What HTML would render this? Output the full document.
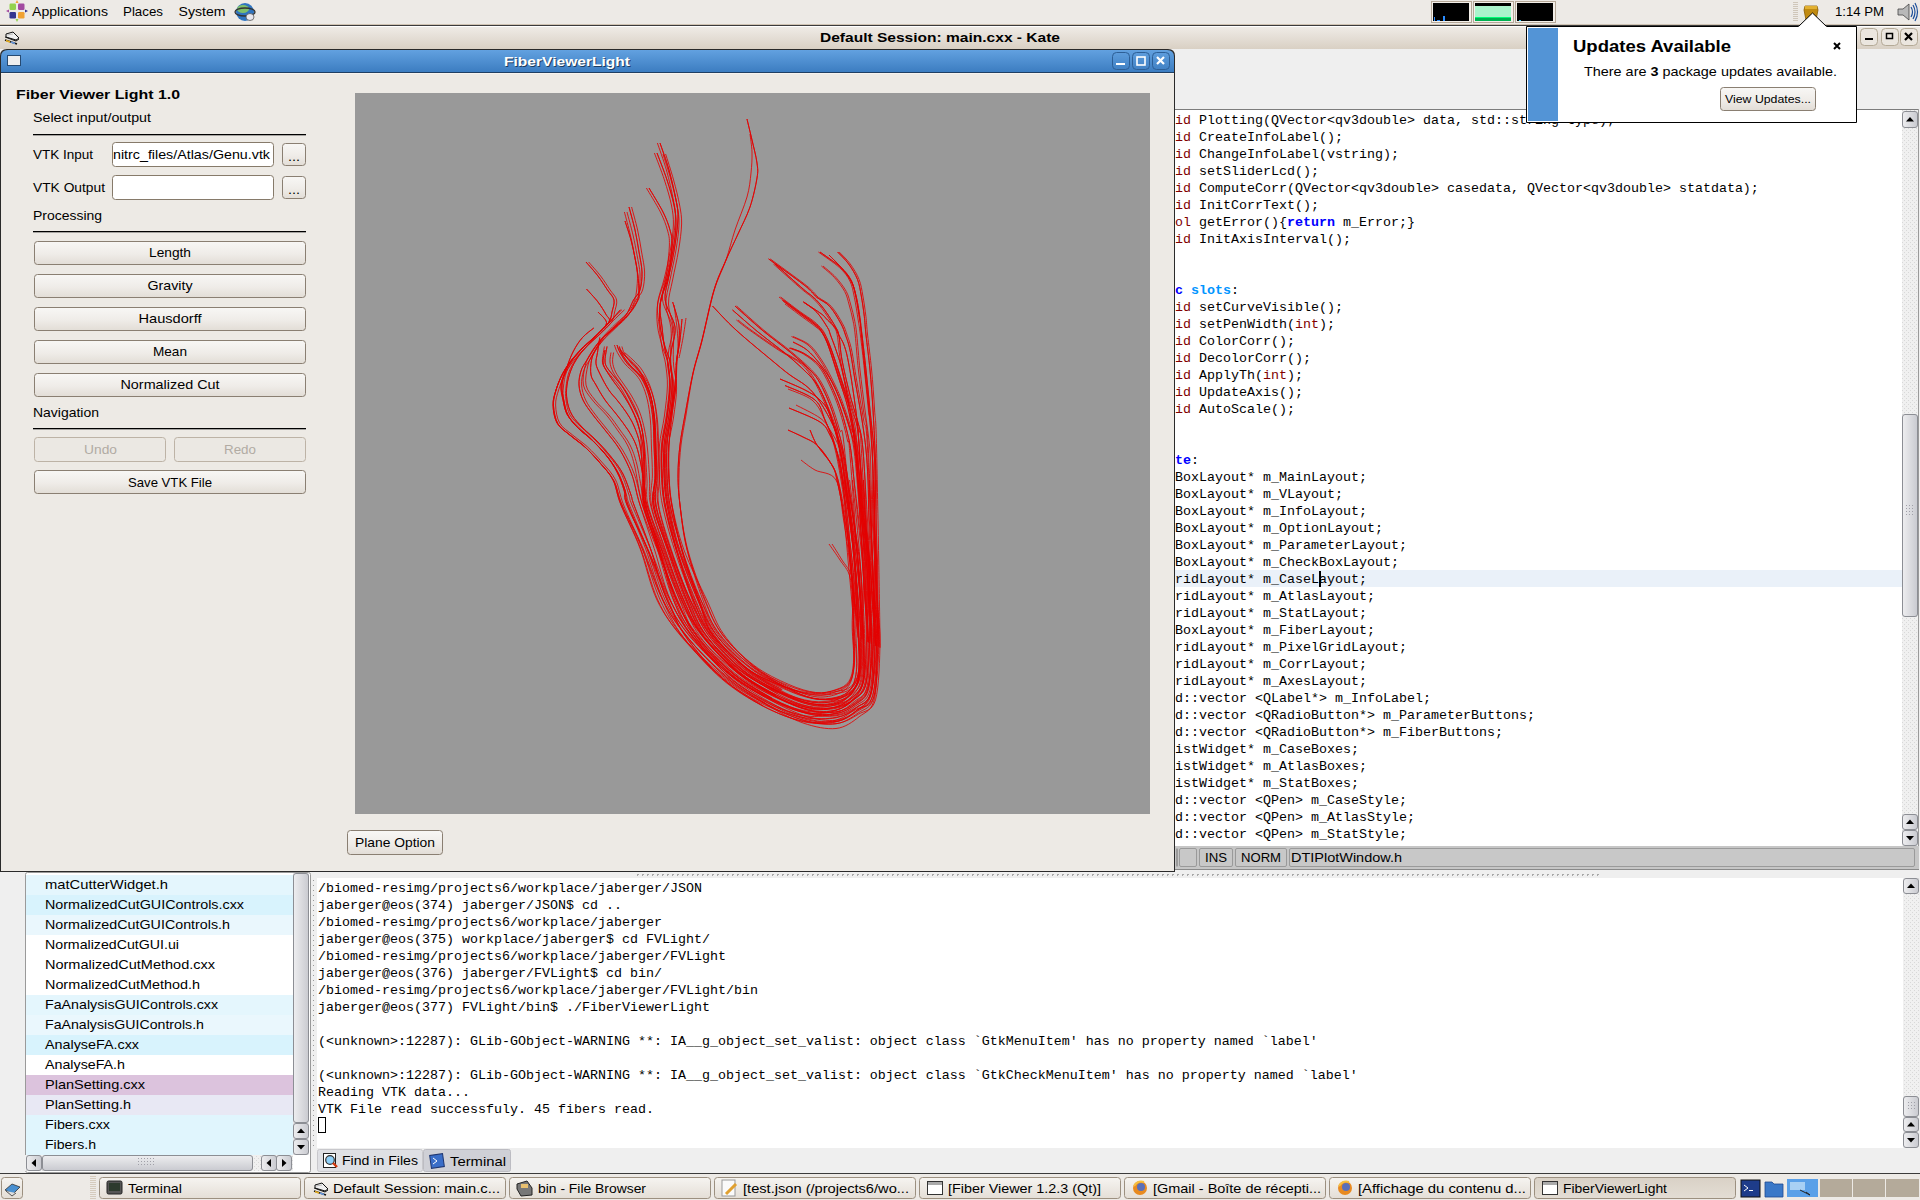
<!DOCTYPE html><html><head><meta charset="utf-8"><title>FiberViewerLight</title>
<style>html,body{margin:0;padding:0;width:1920px;height:1200px;overflow:hidden;background:#edeae5;}svg{display:block;font-family:"Liberation Sans",sans-serif;} text{white-space:pre;}</style></head><body>
<svg width="1920" height="1200" viewBox="0 0 1920 1200">
<defs>
<linearGradient id="btn" x1="0" y1="0" x2="0" y2="1"><stop offset="0" stop-color="#f8f7f5"/><stop offset="0.55" stop-color="#efece8"/><stop offset="1" stop-color="#e2ddd6"/></linearGradient>
<linearGradient id="blue" x1="0" y1="0" x2="0" y2="1"><stop offset="0" stop-color="#62a1e0"/><stop offset="1" stop-color="#3c7dc1"/></linearGradient>
<linearGradient id="katetitle" x1="0" y1="0" x2="0" y2="1"><stop offset="0" stop-color="#efebe6"/><stop offset="1" stop-color="#d9d0c4"/></linearGradient>
<linearGradient id="sb" x1="0" y1="0" x2="1" y2="0"><stop offset="0" stop-color="#eeeef0"/><stop offset="1" stop-color="#c9cad0"/></linearGradient>
<linearGradient id="sbh" x1="0" y1="0" x2="0" y2="1"><stop offset="0" stop-color="#eeeef0"/><stop offset="1" stop-color="#c9cad0"/></linearGradient>
<linearGradient id="task" x1="0" y1="0" x2="0" y2="1"><stop offset="0" stop-color="#f6f4f1"/><stop offset="1" stop-color="#e4ded6"/></linearGradient>
<linearGradient id="taskact" x1="0" y1="0" x2="0" y2="1"><stop offset="0" stop-color="#d9d1c6"/><stop offset="1" stop-color="#e3ddd4"/></linearGradient>
<pattern id="dots" width="4" height="4" patternUnits="userSpaceOnUse"><rect width="4" height="4" fill="#f0f0f0"/><rect x="0" y="0" width="1" height="1" fill="#d8d8d8"/><rect x="2" y="2" width="1" height="1" fill="#d8d8d8"/></pattern>
</defs>
<rect x="0" y="0" width="1920" height="1200" fill="#efefef"/>
<rect x="0" y="0" width="1920" height="24" fill="#edeae6"/>
<rect x="0" y="24" width="1920" height="1" fill="#cfc3b3"/>
<rect x="0" y="25" width="1920" height="1" fill="#3b3b3b"/>
<g transform="translate(17,11)"><rect x="-7.5" y="-7.5" width="6.5" height="6.5" rx="1.2" fill="#93d24e"/><rect x="1" y="-7.5" width="6.5" height="6.5" rx="1.2" fill="#a24aa0"/><rect x="-7.5" y="1" width="6.5" height="6.5" rx="1.2" fill="#33358f"/><rect x="1" y="1" width="6.5" height="6.5" rx="1.2" fill="#f0a232"/><path d="M-1.5 -8 L0 -11 L1.5 -8 Z" fill="#f0a232"/><path d="M8 -1.5 L11 0 L8 1.5 Z" fill="#33358f"/><path d="M-8 -1.5 L-11 0 L-8 1.5 Z" fill="#a24aa0"/><path d="M-1.5 8 L0 11 L1.5 8 Z" fill="#93d24e"/></g>
<text x="32" y="16" font-size="12.7" fill="#000" textLength="76" lengthAdjust="spacingAndGlyphs">Applications</text>
<text x="123" y="16" font-size="12.7" fill="#000" textLength="40" lengthAdjust="spacingAndGlyphs">Places</text>
<text x="178.5" y="16" font-size="12.7" fill="#000" textLength="47" lengthAdjust="spacingAndGlyphs">System</text>
<circle cx="245" cy="12" r="9" fill="#2f74c0"/><ellipse cx="243" cy="9" rx="6" ry="4" fill="#7fc06a"/><ellipse cx="245" cy="12" rx="10" ry="4" fill="none" stroke="#333" stroke-width="1.3"/><ellipse cx="250" cy="17" rx="4" ry="3.5" fill="#e8e8f0" stroke="#555" stroke-width="0.8"/>
<rect x="1431.5" y="1.5" width="40" height="21" fill="#f3efe9" stroke="#b5a898" stroke-width="1"/>
<rect x="1433" y="3" width="36" height="18" fill="#000"/>
<rect x="1434" y="17" width="1" height="4" fill="#2a8cff"/>
<rect x="1443" y="16" width="2" height="5" fill="#2a8cff"/>
<rect x="1437" y="20" width="3" height="1" fill="#2a8cff"/>
<rect x="1473.5" y="1.5" width="40" height="21" fill="#f3efe9" stroke="#b5a898" stroke-width="1"/>
<rect x="1475" y="3" width="36" height="18" fill="#000"/>
<rect x="1475" y="6" width="36" height="11" fill="#aaf4cc"/>
<rect x="1475" y="17" width="36" height="1" fill="#00ff77"/>
<rect x="1475" y="18" width="36" height="3" fill="#00b050"/>
<rect x="1515.5" y="1.5" width="40" height="21" fill="#f3efe9" stroke="#b5a898" stroke-width="1"/>
<rect x="1517" y="3" width="36" height="18" fill="#000"/>
<rect x="1519" y="20" width="2" height="1" fill="#2ad0ff"/>
<rect x="1793" y="2" width="5" height="1" fill="#cfc6b9"/>
<rect x="1793" y="4" width="5" height="1" fill="#cfc6b9"/>
<rect x="1793" y="6" width="5" height="1" fill="#cfc6b9"/>
<rect x="1793" y="8" width="5" height="1" fill="#cfc6b9"/>
<rect x="1793" y="10" width="5" height="1" fill="#cfc6b9"/>
<rect x="1793" y="12" width="5" height="1" fill="#cfc6b9"/>
<rect x="1793" y="14" width="5" height="1" fill="#cfc6b9"/>
<rect x="1793" y="16" width="5" height="1" fill="#cfc6b9"/>
<rect x="1793" y="18" width="5" height="1" fill="#cfc6b9"/>
<rect x="1793" y="20" width="5" height="1" fill="#cfc6b9"/>
<path d="M1805 6 L1817 6 L1818 10 L1816 20 L1806 20 L1804 10 Z" fill="#c08a10" stroke="#8a5e00" stroke-width="0.8"/><rect x="1805" y="6" width="12" height="3" fill="#e2b030"/>
<text x="1835" y="16" font-size="12.7" fill="#000" textLength="49" lengthAdjust="spacingAndGlyphs">1:14 PM</text>
<path d="M1898 9 L1903 9 L1909 4 L1909 20 L1903 15 L1898 15 Z" fill="#b8b8b8" stroke="#444" stroke-width="0.8"/><path d="M1911 7 Q1914 12 1911 17" fill="none" stroke="#1d4f9a" stroke-width="1.2"/><path d="M1913 5 Q1917 12 1913 19" fill="none" stroke="#1d4f9a" stroke-width="1.2"/><path d="M1915 3 Q1920 12 1915 21" fill="none" stroke="#1d4f9a" stroke-width="1.2"/>
<rect x="0" y="26" width="1920" height="1" fill="#ffffff"/>
<rect x="0" y="27" width="1920" height="22" fill="url(#katetitle)"/>
<g transform="translate(2,28)"><path d="M4 6 L11 4 L17 10 L14 12 L4 9 Z" fill="#f0f0f0" stroke="#111" stroke-width="1"/><path d="M3 9 L14 13 L17 11" fill="none" stroke="#111" stroke-width="1"/><path d="M3 12 L15 16" fill="none" stroke="#111" stroke-width="1.6"/><path d="M4 12.5 L8 14" stroke="#e8b020" stroke-width="1.6"/><path d="M9 14 L13 15.5" stroke="#6a9ae0" stroke-width="1.4"/><path d="M5 7 L11 6" stroke="#bbb" stroke-width="1"/></g>
<text x="820" y="42" font-size="12.7" fill="#000" font-weight="bold" textLength="240" lengthAdjust="spacingAndGlyphs">Default Session: main.cxx - Kate</text>
<rect x="1860.5" y="28.5" width="17" height="17" rx="4" fill="#ebe6df" stroke="#b3a996"/>
<rect x="1865" y="38" width="8" height="2" fill="#000"/>
<rect x="1881.5" y="28.5" width="17" height="17" rx="4" fill="#ebe6df" stroke="#b3a996"/>
<rect x="1886.5" y="33.5" width="6" height="5" fill="none" stroke="#000" stroke-width="1.5"/>
<rect x="1900.5" y="28.5" width="17" height="17" rx="4" fill="#ebe6df" stroke="#b3a996"/>
<path d="M1905 33 L1912 40 M1912 33 L1905 40" stroke="#000" stroke-width="2.2"/>
<rect x="1175" y="49" width="745" height="61" fill="#efefef"/>
<rect x="1175" y="109" width="744" height="1" fill="#7c7c7c"/>
<rect x="1175" y="110" width="728" height="736" fill="#ffffff"/>
<rect x="1918" y="109" width="1" height="761" fill="#9a9a9a"/>
<rect x="1175" y="570" width="728" height="17" fill="#eaf1f9"/>
<clipPath id="edclip"><rect x="1175" y="110" width="728" height="736"/></clipPath>
<g clip-path="url(#edclip)" font-family="'Liberation Mono', monospace" font-size="13.333">
<text x="1175" y="124"><tspan fill="#800000">id</tspan><tspan fill="#000"> Plotting(QVector&lt;qv3double&gt; data, std::string type);</tspan></text>
<text x="1175" y="141"><tspan fill="#800000">id</tspan><tspan fill="#000"> CreateInfoLabel();</tspan></text>
<text x="1175" y="158"><tspan fill="#800000">id</tspan><tspan fill="#000"> ChangeInfoLabel(vstring);</tspan></text>
<text x="1175" y="175"><tspan fill="#800000">id</tspan><tspan fill="#000"> setSliderLcd();</tspan></text>
<text x="1175" y="192"><tspan fill="#800000">id</tspan><tspan fill="#000"> ComputeCorr(QVector&lt;qv3double&gt; casedata, QVector&lt;qv3double&gt; statdata);</tspan></text>
<text x="1175" y="209"><tspan fill="#800000">id</tspan><tspan fill="#000"> InitCorrText();</tspan></text>
<text x="1175" y="226"><tspan fill="#800000">ol</tspan><tspan fill="#000"> getError(){</tspan><tspan fill="#0000ff" font-weight="bold">return</tspan><tspan fill="#000"> m_Error;}</tspan></text>
<text x="1175" y="243"><tspan fill="#800000">id</tspan><tspan fill="#000"> InitAxisInterval();</tspan></text>
<text x="1175" y="294"><tspan fill="#0000ff" font-weight="bold">c</tspan><tspan fill="#000"> </tspan><tspan fill="#0095ff" font-weight="bold">slots</tspan><tspan fill="#000">:</tspan></text>
<text x="1175" y="311"><tspan fill="#800000">id</tspan><tspan fill="#000"> setCurveVisible();</tspan></text>
<text x="1175" y="328"><tspan fill="#800000">id</tspan><tspan fill="#000"> setPenWidth(</tspan><tspan fill="#800000">int</tspan><tspan fill="#000">);</tspan></text>
<text x="1175" y="345"><tspan fill="#800000">id</tspan><tspan fill="#000"> ColorCorr();</tspan></text>
<text x="1175" y="362"><tspan fill="#800000">id</tspan><tspan fill="#000"> DecolorCorr();</tspan></text>
<text x="1175" y="379"><tspan fill="#800000">id</tspan><tspan fill="#000"> ApplyTh(</tspan><tspan fill="#800000">int</tspan><tspan fill="#000">);</tspan></text>
<text x="1175" y="396"><tspan fill="#800000">id</tspan><tspan fill="#000"> UpdateAxis();</tspan></text>
<text x="1175" y="413"><tspan fill="#800000">id</tspan><tspan fill="#000"> AutoScale();</tspan></text>
<text x="1175" y="464"><tspan fill="#0000ff" font-weight="bold">te</tspan><tspan fill="#000">:</tspan></text>
<text x="1175" y="481"><tspan fill="#000">BoxLayout* m_MainLayout;</tspan></text>
<text x="1175" y="498"><tspan fill="#000">BoxLayout* m_VLayout;</tspan></text>
<text x="1175" y="515"><tspan fill="#000">BoxLayout* m_InfoLayout;</tspan></text>
<text x="1175" y="532"><tspan fill="#000">BoxLayout* m_OptionLayout;</tspan></text>
<text x="1175" y="549"><tspan fill="#000">BoxLayout* m_ParameterLayout;</tspan></text>
<text x="1175" y="566"><tspan fill="#000">BoxLayout* m_CheckBoxLayout;</tspan></text>
<text x="1175" y="583"><tspan fill="#000">ridLayout* m_CaseLayout;</tspan></text>
<text x="1175" y="600"><tspan fill="#000">ridLayout* m_AtlasLayout;</tspan></text>
<text x="1175" y="617"><tspan fill="#000">ridLayout* m_StatLayout;</tspan></text>
<text x="1175" y="634"><tspan fill="#000">BoxLayout* m_FiberLayout;</tspan></text>
<text x="1175" y="651"><tspan fill="#000">ridLayout* m_PixelGridLayout;</tspan></text>
<text x="1175" y="668"><tspan fill="#000">ridLayout* m_CorrLayout;</tspan></text>
<text x="1175" y="685"><tspan fill="#000">ridLayout* m_AxesLayout;</tspan></text>
<text x="1175" y="702"><tspan fill="#000">d::vector &lt;QLabel*&gt; m_InfoLabel;</tspan></text>
<text x="1175" y="719"><tspan fill="#000">d::vector &lt;QRadioButton*&gt; m_ParameterButtons;</tspan></text>
<text x="1175" y="736"><tspan fill="#000">d::vector &lt;QRadioButton*&gt; m_FiberButtons;</tspan></text>
<text x="1175" y="753"><tspan fill="#000">istWidget* m_CaseBoxes;</tspan></text>
<text x="1175" y="770"><tspan fill="#000">istWidget* m_AtlasBoxes;</tspan></text>
<text x="1175" y="787"><tspan fill="#000">istWidget* m_StatBoxes;</tspan></text>
<text x="1175" y="804"><tspan fill="#000">d::vector &lt;QPen&gt; m_CaseStyle;</tspan></text>
<text x="1175" y="821"><tspan fill="#000">d::vector &lt;QPen&gt; m_AtlasStyle;</tspan></text>
<text x="1175" y="838"><tspan fill="#000">d::vector &lt;QPen&gt; m_StatStyle;</tspan></text>
<text x="1175" y="855"><tspan fill="#000">d::vector &lt;QPen&gt; m_FiberStyle;</tspan></text>
</g>
<rect x="1319" y="571" width="2" height="16" fill="#000"/>
<rect x="1902" y="110" width="16" height="736" fill="url(#dots)"/>
<rect x="1902.5" y="111.5" width="15" height="16" rx="2.5" fill="url(#sb)" stroke="#8c8e94"/>
<path d="M1906.0 121.5 L1914.0 121.5 L1910.0 117.0 Z" fill="#000"/>
<rect x="1902.5" y="414.5" width="15" height="202" rx="2.5" fill="url(#sb)" stroke="#8c8e94"/>
<rect x="1906" y="505" width="1" height="1" fill="#a0a0a8"/>
<rect x="1909" y="505" width="1" height="1" fill="#a0a0a8"/>
<rect x="1912" y="505" width="1" height="1" fill="#a0a0a8"/>
<rect x="1906" y="508" width="1" height="1" fill="#a0a0a8"/>
<rect x="1909" y="508" width="1" height="1" fill="#a0a0a8"/>
<rect x="1912" y="508" width="1" height="1" fill="#a0a0a8"/>
<rect x="1906" y="511" width="1" height="1" fill="#a0a0a8"/>
<rect x="1909" y="511" width="1" height="1" fill="#a0a0a8"/>
<rect x="1912" y="511" width="1" height="1" fill="#a0a0a8"/>
<rect x="1906" y="514" width="1" height="1" fill="#a0a0a8"/>
<rect x="1909" y="514" width="1" height="1" fill="#a0a0a8"/>
<rect x="1912" y="514" width="1" height="1" fill="#a0a0a8"/>
<rect x="1902.5" y="814.5" width="15" height="15" rx="2.5" fill="url(#sb)" stroke="#8c8e94"/>
<path d="M1906.0 824.0 L1914.0 824.0 L1910.0 819.5 Z" fill="#000"/>
<rect x="1902.5" y="830.5" width="15" height="15" rx="2.5" fill="url(#sb)" stroke="#8c8e94"/>
<path d="M1906.0 836.0 L1914.0 836.0 L1910.0 840.5 Z" fill="#000"/>
<rect x="1175" y="846" width="744" height="24" fill="#c6c6c6"/>
<rect x="1175" y="869" width="744" height="1" fill="#8a8a8a"/>
<rect x="1176.5" y="848.5" width="1" height="18" rx="1.5" fill="#c8c8c8" stroke="#9a9a9a"/>
<rect x="1179.5" y="848.5" width="17" height="18" rx="1.5" fill="#c8c8c8" stroke="#9a9a9a"/>
<rect x="1199.5" y="848.5" width="33" height="18" rx="1.5" fill="#c8c8c8" stroke="#9a9a9a"/>
<text x="1205" y="862" font-size="12.7" fill="#000" textLength="22" lengthAdjust="spacingAndGlyphs">INS</text>
<rect x="1235.5" y="848.5" width="51" height="18" rx="1.5" fill="#c8c8c8" stroke="#9a9a9a"/>
<text x="1241" y="862" font-size="12.7" fill="#000" textLength="40" lengthAdjust="spacingAndGlyphs">NORM</text>
<rect x="1289.5" y="848.5" width="625" height="18" rx="1.5" fill="#c8c8c8" stroke="#9a9a9a"/>
<text x="1291" y="862" font-size="12.7" fill="#000" textLength="111" lengthAdjust="spacingAndGlyphs">DTIPlotWindow.h</text>
<rect x="317" y="870" width="1603" height="8" fill="#efefef"/>
<rect x="637" y="874" width="2" height="1" fill="#a8a8a8"/>
<rect x="637" y="875" width="1" height="1" fill="#a8a8a8"/>
<rect x="642" y="874" width="2" height="1" fill="#a8a8a8"/>
<rect x="642" y="875" width="1" height="1" fill="#a8a8a8"/>
<rect x="647" y="874" width="2" height="1" fill="#a8a8a8"/>
<rect x="647" y="875" width="1" height="1" fill="#a8a8a8"/>
<rect x="652" y="874" width="2" height="1" fill="#a8a8a8"/>
<rect x="652" y="875" width="1" height="1" fill="#a8a8a8"/>
<rect x="657" y="874" width="2" height="1" fill="#a8a8a8"/>
<rect x="657" y="875" width="1" height="1" fill="#a8a8a8"/>
<rect x="662" y="874" width="2" height="1" fill="#a8a8a8"/>
<rect x="662" y="875" width="1" height="1" fill="#a8a8a8"/>
<rect x="667" y="874" width="2" height="1" fill="#a8a8a8"/>
<rect x="667" y="875" width="1" height="1" fill="#a8a8a8"/>
<rect x="672" y="874" width="2" height="1" fill="#a8a8a8"/>
<rect x="672" y="875" width="1" height="1" fill="#a8a8a8"/>
<rect x="677" y="874" width="2" height="1" fill="#a8a8a8"/>
<rect x="677" y="875" width="1" height="1" fill="#a8a8a8"/>
<rect x="682" y="874" width="2" height="1" fill="#a8a8a8"/>
<rect x="682" y="875" width="1" height="1" fill="#a8a8a8"/>
<rect x="687" y="874" width="2" height="1" fill="#a8a8a8"/>
<rect x="687" y="875" width="1" height="1" fill="#a8a8a8"/>
<rect x="692" y="874" width="2" height="1" fill="#a8a8a8"/>
<rect x="692" y="875" width="1" height="1" fill="#a8a8a8"/>
<rect x="697" y="874" width="2" height="1" fill="#a8a8a8"/>
<rect x="697" y="875" width="1" height="1" fill="#a8a8a8"/>
<rect x="702" y="874" width="2" height="1" fill="#a8a8a8"/>
<rect x="702" y="875" width="1" height="1" fill="#a8a8a8"/>
<rect x="707" y="874" width="2" height="1" fill="#a8a8a8"/>
<rect x="707" y="875" width="1" height="1" fill="#a8a8a8"/>
<rect x="712" y="874" width="2" height="1" fill="#a8a8a8"/>
<rect x="712" y="875" width="1" height="1" fill="#a8a8a8"/>
<rect x="717" y="874" width="2" height="1" fill="#a8a8a8"/>
<rect x="717" y="875" width="1" height="1" fill="#a8a8a8"/>
<rect x="722" y="874" width="2" height="1" fill="#a8a8a8"/>
<rect x="722" y="875" width="1" height="1" fill="#a8a8a8"/>
<rect x="727" y="874" width="2" height="1" fill="#a8a8a8"/>
<rect x="727" y="875" width="1" height="1" fill="#a8a8a8"/>
<rect x="732" y="874" width="2" height="1" fill="#a8a8a8"/>
<rect x="732" y="875" width="1" height="1" fill="#a8a8a8"/>
<rect x="737" y="874" width="2" height="1" fill="#a8a8a8"/>
<rect x="737" y="875" width="1" height="1" fill="#a8a8a8"/>
<rect x="742" y="874" width="2" height="1" fill="#a8a8a8"/>
<rect x="742" y="875" width="1" height="1" fill="#a8a8a8"/>
<rect x="747" y="874" width="2" height="1" fill="#a8a8a8"/>
<rect x="747" y="875" width="1" height="1" fill="#a8a8a8"/>
<rect x="752" y="874" width="2" height="1" fill="#a8a8a8"/>
<rect x="752" y="875" width="1" height="1" fill="#a8a8a8"/>
<rect x="757" y="874" width="2" height="1" fill="#a8a8a8"/>
<rect x="757" y="875" width="1" height="1" fill="#a8a8a8"/>
<rect x="762" y="874" width="2" height="1" fill="#a8a8a8"/>
<rect x="762" y="875" width="1" height="1" fill="#a8a8a8"/>
<rect x="767" y="874" width="2" height="1" fill="#a8a8a8"/>
<rect x="767" y="875" width="1" height="1" fill="#a8a8a8"/>
<rect x="772" y="874" width="2" height="1" fill="#a8a8a8"/>
<rect x="772" y="875" width="1" height="1" fill="#a8a8a8"/>
<rect x="777" y="874" width="2" height="1" fill="#a8a8a8"/>
<rect x="777" y="875" width="1" height="1" fill="#a8a8a8"/>
<rect x="782" y="874" width="2" height="1" fill="#a8a8a8"/>
<rect x="782" y="875" width="1" height="1" fill="#a8a8a8"/>
<rect x="787" y="874" width="2" height="1" fill="#a8a8a8"/>
<rect x="787" y="875" width="1" height="1" fill="#a8a8a8"/>
<rect x="792" y="874" width="2" height="1" fill="#a8a8a8"/>
<rect x="792" y="875" width="1" height="1" fill="#a8a8a8"/>
<rect x="797" y="874" width="2" height="1" fill="#a8a8a8"/>
<rect x="797" y="875" width="1" height="1" fill="#a8a8a8"/>
<rect x="802" y="874" width="2" height="1" fill="#a8a8a8"/>
<rect x="802" y="875" width="1" height="1" fill="#a8a8a8"/>
<rect x="807" y="874" width="2" height="1" fill="#a8a8a8"/>
<rect x="807" y="875" width="1" height="1" fill="#a8a8a8"/>
<rect x="812" y="874" width="2" height="1" fill="#a8a8a8"/>
<rect x="812" y="875" width="1" height="1" fill="#a8a8a8"/>
<rect x="817" y="874" width="2" height="1" fill="#a8a8a8"/>
<rect x="817" y="875" width="1" height="1" fill="#a8a8a8"/>
<rect x="822" y="874" width="2" height="1" fill="#a8a8a8"/>
<rect x="822" y="875" width="1" height="1" fill="#a8a8a8"/>
<rect x="827" y="874" width="2" height="1" fill="#a8a8a8"/>
<rect x="827" y="875" width="1" height="1" fill="#a8a8a8"/>
<rect x="832" y="874" width="2" height="1" fill="#a8a8a8"/>
<rect x="832" y="875" width="1" height="1" fill="#a8a8a8"/>
<rect x="837" y="874" width="2" height="1" fill="#a8a8a8"/>
<rect x="837" y="875" width="1" height="1" fill="#a8a8a8"/>
<rect x="842" y="874" width="2" height="1" fill="#a8a8a8"/>
<rect x="842" y="875" width="1" height="1" fill="#a8a8a8"/>
<rect x="847" y="874" width="2" height="1" fill="#a8a8a8"/>
<rect x="847" y="875" width="1" height="1" fill="#a8a8a8"/>
<rect x="852" y="874" width="2" height="1" fill="#a8a8a8"/>
<rect x="852" y="875" width="1" height="1" fill="#a8a8a8"/>
<rect x="857" y="874" width="2" height="1" fill="#a8a8a8"/>
<rect x="857" y="875" width="1" height="1" fill="#a8a8a8"/>
<rect x="862" y="874" width="2" height="1" fill="#a8a8a8"/>
<rect x="862" y="875" width="1" height="1" fill="#a8a8a8"/>
<rect x="867" y="874" width="2" height="1" fill="#a8a8a8"/>
<rect x="867" y="875" width="1" height="1" fill="#a8a8a8"/>
<rect x="872" y="874" width="2" height="1" fill="#a8a8a8"/>
<rect x="872" y="875" width="1" height="1" fill="#a8a8a8"/>
<rect x="877" y="874" width="2" height="1" fill="#a8a8a8"/>
<rect x="877" y="875" width="1" height="1" fill="#a8a8a8"/>
<rect x="882" y="874" width="2" height="1" fill="#a8a8a8"/>
<rect x="882" y="875" width="1" height="1" fill="#a8a8a8"/>
<rect x="887" y="874" width="2" height="1" fill="#a8a8a8"/>
<rect x="887" y="875" width="1" height="1" fill="#a8a8a8"/>
<rect x="892" y="874" width="2" height="1" fill="#a8a8a8"/>
<rect x="892" y="875" width="1" height="1" fill="#a8a8a8"/>
<rect x="897" y="874" width="2" height="1" fill="#a8a8a8"/>
<rect x="897" y="875" width="1" height="1" fill="#a8a8a8"/>
<rect x="902" y="874" width="2" height="1" fill="#a8a8a8"/>
<rect x="902" y="875" width="1" height="1" fill="#a8a8a8"/>
<rect x="907" y="874" width="2" height="1" fill="#a8a8a8"/>
<rect x="907" y="875" width="1" height="1" fill="#a8a8a8"/>
<rect x="912" y="874" width="2" height="1" fill="#a8a8a8"/>
<rect x="912" y="875" width="1" height="1" fill="#a8a8a8"/>
<rect x="917" y="874" width="2" height="1" fill="#a8a8a8"/>
<rect x="917" y="875" width="1" height="1" fill="#a8a8a8"/>
<rect x="922" y="874" width="2" height="1" fill="#a8a8a8"/>
<rect x="922" y="875" width="1" height="1" fill="#a8a8a8"/>
<rect x="927" y="874" width="2" height="1" fill="#a8a8a8"/>
<rect x="927" y="875" width="1" height="1" fill="#a8a8a8"/>
<rect x="932" y="874" width="2" height="1" fill="#a8a8a8"/>
<rect x="932" y="875" width="1" height="1" fill="#a8a8a8"/>
<rect x="937" y="874" width="2" height="1" fill="#a8a8a8"/>
<rect x="937" y="875" width="1" height="1" fill="#a8a8a8"/>
<rect x="942" y="874" width="2" height="1" fill="#a8a8a8"/>
<rect x="942" y="875" width="1" height="1" fill="#a8a8a8"/>
<rect x="947" y="874" width="2" height="1" fill="#a8a8a8"/>
<rect x="947" y="875" width="1" height="1" fill="#a8a8a8"/>
<rect x="952" y="874" width="2" height="1" fill="#a8a8a8"/>
<rect x="952" y="875" width="1" height="1" fill="#a8a8a8"/>
<rect x="957" y="874" width="2" height="1" fill="#a8a8a8"/>
<rect x="957" y="875" width="1" height="1" fill="#a8a8a8"/>
<rect x="962" y="874" width="2" height="1" fill="#a8a8a8"/>
<rect x="962" y="875" width="1" height="1" fill="#a8a8a8"/>
<rect x="967" y="874" width="2" height="1" fill="#a8a8a8"/>
<rect x="967" y="875" width="1" height="1" fill="#a8a8a8"/>
<rect x="972" y="874" width="2" height="1" fill="#a8a8a8"/>
<rect x="972" y="875" width="1" height="1" fill="#a8a8a8"/>
<rect x="977" y="874" width="2" height="1" fill="#a8a8a8"/>
<rect x="977" y="875" width="1" height="1" fill="#a8a8a8"/>
<rect x="982" y="874" width="2" height="1" fill="#a8a8a8"/>
<rect x="982" y="875" width="1" height="1" fill="#a8a8a8"/>
<rect x="987" y="874" width="2" height="1" fill="#a8a8a8"/>
<rect x="987" y="875" width="1" height="1" fill="#a8a8a8"/>
<rect x="992" y="874" width="2" height="1" fill="#a8a8a8"/>
<rect x="992" y="875" width="1" height="1" fill="#a8a8a8"/>
<rect x="997" y="874" width="2" height="1" fill="#a8a8a8"/>
<rect x="997" y="875" width="1" height="1" fill="#a8a8a8"/>
<rect x="1002" y="874" width="2" height="1" fill="#a8a8a8"/>
<rect x="1002" y="875" width="1" height="1" fill="#a8a8a8"/>
<rect x="1007" y="874" width="2" height="1" fill="#a8a8a8"/>
<rect x="1007" y="875" width="1" height="1" fill="#a8a8a8"/>
<rect x="1012" y="874" width="2" height="1" fill="#a8a8a8"/>
<rect x="1012" y="875" width="1" height="1" fill="#a8a8a8"/>
<rect x="1017" y="874" width="2" height="1" fill="#a8a8a8"/>
<rect x="1017" y="875" width="1" height="1" fill="#a8a8a8"/>
<rect x="1022" y="874" width="2" height="1" fill="#a8a8a8"/>
<rect x="1022" y="875" width="1" height="1" fill="#a8a8a8"/>
<rect x="1027" y="874" width="2" height="1" fill="#a8a8a8"/>
<rect x="1027" y="875" width="1" height="1" fill="#a8a8a8"/>
<rect x="1032" y="874" width="2" height="1" fill="#a8a8a8"/>
<rect x="1032" y="875" width="1" height="1" fill="#a8a8a8"/>
<rect x="1037" y="874" width="2" height="1" fill="#a8a8a8"/>
<rect x="1037" y="875" width="1" height="1" fill="#a8a8a8"/>
<rect x="1042" y="874" width="2" height="1" fill="#a8a8a8"/>
<rect x="1042" y="875" width="1" height="1" fill="#a8a8a8"/>
<rect x="1047" y="874" width="2" height="1" fill="#a8a8a8"/>
<rect x="1047" y="875" width="1" height="1" fill="#a8a8a8"/>
<rect x="1052" y="874" width="2" height="1" fill="#a8a8a8"/>
<rect x="1052" y="875" width="1" height="1" fill="#a8a8a8"/>
<rect x="1057" y="874" width="2" height="1" fill="#a8a8a8"/>
<rect x="1057" y="875" width="1" height="1" fill="#a8a8a8"/>
<rect x="1062" y="874" width="2" height="1" fill="#a8a8a8"/>
<rect x="1062" y="875" width="1" height="1" fill="#a8a8a8"/>
<rect x="1067" y="874" width="2" height="1" fill="#a8a8a8"/>
<rect x="1067" y="875" width="1" height="1" fill="#a8a8a8"/>
<rect x="1072" y="874" width="2" height="1" fill="#a8a8a8"/>
<rect x="1072" y="875" width="1" height="1" fill="#a8a8a8"/>
<rect x="1077" y="874" width="2" height="1" fill="#a8a8a8"/>
<rect x="1077" y="875" width="1" height="1" fill="#a8a8a8"/>
<rect x="1082" y="874" width="2" height="1" fill="#a8a8a8"/>
<rect x="1082" y="875" width="1" height="1" fill="#a8a8a8"/>
<rect x="1087" y="874" width="2" height="1" fill="#a8a8a8"/>
<rect x="1087" y="875" width="1" height="1" fill="#a8a8a8"/>
<rect x="1092" y="874" width="2" height="1" fill="#a8a8a8"/>
<rect x="1092" y="875" width="1" height="1" fill="#a8a8a8"/>
<rect x="1097" y="874" width="2" height="1" fill="#a8a8a8"/>
<rect x="1097" y="875" width="1" height="1" fill="#a8a8a8"/>
<rect x="1102" y="874" width="2" height="1" fill="#a8a8a8"/>
<rect x="1102" y="875" width="1" height="1" fill="#a8a8a8"/>
<rect x="1107" y="874" width="2" height="1" fill="#a8a8a8"/>
<rect x="1107" y="875" width="1" height="1" fill="#a8a8a8"/>
<rect x="1112" y="874" width="2" height="1" fill="#a8a8a8"/>
<rect x="1112" y="875" width="1" height="1" fill="#a8a8a8"/>
<rect x="1117" y="874" width="2" height="1" fill="#a8a8a8"/>
<rect x="1117" y="875" width="1" height="1" fill="#a8a8a8"/>
<rect x="1122" y="874" width="2" height="1" fill="#a8a8a8"/>
<rect x="1122" y="875" width="1" height="1" fill="#a8a8a8"/>
<rect x="1127" y="874" width="2" height="1" fill="#a8a8a8"/>
<rect x="1127" y="875" width="1" height="1" fill="#a8a8a8"/>
<rect x="1132" y="874" width="2" height="1" fill="#a8a8a8"/>
<rect x="1132" y="875" width="1" height="1" fill="#a8a8a8"/>
<rect x="1137" y="874" width="2" height="1" fill="#a8a8a8"/>
<rect x="1137" y="875" width="1" height="1" fill="#a8a8a8"/>
<rect x="1142" y="874" width="2" height="1" fill="#a8a8a8"/>
<rect x="1142" y="875" width="1" height="1" fill="#a8a8a8"/>
<rect x="1147" y="874" width="2" height="1" fill="#a8a8a8"/>
<rect x="1147" y="875" width="1" height="1" fill="#a8a8a8"/>
<rect x="1152" y="874" width="2" height="1" fill="#a8a8a8"/>
<rect x="1152" y="875" width="1" height="1" fill="#a8a8a8"/>
<rect x="1157" y="874" width="2" height="1" fill="#a8a8a8"/>
<rect x="1157" y="875" width="1" height="1" fill="#a8a8a8"/>
<rect x="1162" y="874" width="2" height="1" fill="#a8a8a8"/>
<rect x="1162" y="875" width="1" height="1" fill="#a8a8a8"/>
<rect x="1167" y="874" width="2" height="1" fill="#a8a8a8"/>
<rect x="1167" y="875" width="1" height="1" fill="#a8a8a8"/>
<rect x="1172" y="874" width="2" height="1" fill="#a8a8a8"/>
<rect x="1172" y="875" width="1" height="1" fill="#a8a8a8"/>
<rect x="1177" y="874" width="2" height="1" fill="#a8a8a8"/>
<rect x="1177" y="875" width="1" height="1" fill="#a8a8a8"/>
<rect x="1182" y="874" width="2" height="1" fill="#a8a8a8"/>
<rect x="1182" y="875" width="1" height="1" fill="#a8a8a8"/>
<rect x="1187" y="874" width="2" height="1" fill="#a8a8a8"/>
<rect x="1187" y="875" width="1" height="1" fill="#a8a8a8"/>
<rect x="1192" y="874" width="2" height="1" fill="#a8a8a8"/>
<rect x="1192" y="875" width="1" height="1" fill="#a8a8a8"/>
<rect x="1197" y="874" width="2" height="1" fill="#a8a8a8"/>
<rect x="1197" y="875" width="1" height="1" fill="#a8a8a8"/>
<rect x="1202" y="874" width="2" height="1" fill="#a8a8a8"/>
<rect x="1202" y="875" width="1" height="1" fill="#a8a8a8"/>
<rect x="1207" y="874" width="2" height="1" fill="#a8a8a8"/>
<rect x="1207" y="875" width="1" height="1" fill="#a8a8a8"/>
<rect x="1212" y="874" width="2" height="1" fill="#a8a8a8"/>
<rect x="1212" y="875" width="1" height="1" fill="#a8a8a8"/>
<rect x="1217" y="874" width="2" height="1" fill="#a8a8a8"/>
<rect x="1217" y="875" width="1" height="1" fill="#a8a8a8"/>
<rect x="1222" y="874" width="2" height="1" fill="#a8a8a8"/>
<rect x="1222" y="875" width="1" height="1" fill="#a8a8a8"/>
<rect x="1227" y="874" width="2" height="1" fill="#a8a8a8"/>
<rect x="1227" y="875" width="1" height="1" fill="#a8a8a8"/>
<rect x="1232" y="874" width="2" height="1" fill="#a8a8a8"/>
<rect x="1232" y="875" width="1" height="1" fill="#a8a8a8"/>
<rect x="1237" y="874" width="2" height="1" fill="#a8a8a8"/>
<rect x="1237" y="875" width="1" height="1" fill="#a8a8a8"/>
<rect x="1242" y="874" width="2" height="1" fill="#a8a8a8"/>
<rect x="1242" y="875" width="1" height="1" fill="#a8a8a8"/>
<rect x="1247" y="874" width="2" height="1" fill="#a8a8a8"/>
<rect x="1247" y="875" width="1" height="1" fill="#a8a8a8"/>
<rect x="1252" y="874" width="2" height="1" fill="#a8a8a8"/>
<rect x="1252" y="875" width="1" height="1" fill="#a8a8a8"/>
<rect x="1257" y="874" width="2" height="1" fill="#a8a8a8"/>
<rect x="1257" y="875" width="1" height="1" fill="#a8a8a8"/>
<rect x="1262" y="874" width="2" height="1" fill="#a8a8a8"/>
<rect x="1262" y="875" width="1" height="1" fill="#a8a8a8"/>
<rect x="1267" y="874" width="2" height="1" fill="#a8a8a8"/>
<rect x="1267" y="875" width="1" height="1" fill="#a8a8a8"/>
<rect x="1272" y="874" width="2" height="1" fill="#a8a8a8"/>
<rect x="1272" y="875" width="1" height="1" fill="#a8a8a8"/>
<rect x="1277" y="874" width="2" height="1" fill="#a8a8a8"/>
<rect x="1277" y="875" width="1" height="1" fill="#a8a8a8"/>
<rect x="1282" y="874" width="2" height="1" fill="#a8a8a8"/>
<rect x="1282" y="875" width="1" height="1" fill="#a8a8a8"/>
<rect x="1287" y="874" width="2" height="1" fill="#a8a8a8"/>
<rect x="1287" y="875" width="1" height="1" fill="#a8a8a8"/>
<rect x="1292" y="874" width="2" height="1" fill="#a8a8a8"/>
<rect x="1292" y="875" width="1" height="1" fill="#a8a8a8"/>
<rect x="1297" y="874" width="2" height="1" fill="#a8a8a8"/>
<rect x="1297" y="875" width="1" height="1" fill="#a8a8a8"/>
<rect x="1302" y="874" width="2" height="1" fill="#a8a8a8"/>
<rect x="1302" y="875" width="1" height="1" fill="#a8a8a8"/>
<rect x="1307" y="874" width="2" height="1" fill="#a8a8a8"/>
<rect x="1307" y="875" width="1" height="1" fill="#a8a8a8"/>
<rect x="1312" y="874" width="2" height="1" fill="#a8a8a8"/>
<rect x="1312" y="875" width="1" height="1" fill="#a8a8a8"/>
<rect x="1317" y="874" width="2" height="1" fill="#a8a8a8"/>
<rect x="1317" y="875" width="1" height="1" fill="#a8a8a8"/>
<rect x="1322" y="874" width="2" height="1" fill="#a8a8a8"/>
<rect x="1322" y="875" width="1" height="1" fill="#a8a8a8"/>
<rect x="1327" y="874" width="2" height="1" fill="#a8a8a8"/>
<rect x="1327" y="875" width="1" height="1" fill="#a8a8a8"/>
<rect x="1332" y="874" width="2" height="1" fill="#a8a8a8"/>
<rect x="1332" y="875" width="1" height="1" fill="#a8a8a8"/>
<rect x="1337" y="874" width="2" height="1" fill="#a8a8a8"/>
<rect x="1337" y="875" width="1" height="1" fill="#a8a8a8"/>
<rect x="1342" y="874" width="2" height="1" fill="#a8a8a8"/>
<rect x="1342" y="875" width="1" height="1" fill="#a8a8a8"/>
<rect x="1347" y="874" width="2" height="1" fill="#a8a8a8"/>
<rect x="1347" y="875" width="1" height="1" fill="#a8a8a8"/>
<rect x="1352" y="874" width="2" height="1" fill="#a8a8a8"/>
<rect x="1352" y="875" width="1" height="1" fill="#a8a8a8"/>
<rect x="1357" y="874" width="2" height="1" fill="#a8a8a8"/>
<rect x="1357" y="875" width="1" height="1" fill="#a8a8a8"/>
<rect x="1362" y="874" width="2" height="1" fill="#a8a8a8"/>
<rect x="1362" y="875" width="1" height="1" fill="#a8a8a8"/>
<rect x="1367" y="874" width="2" height="1" fill="#a8a8a8"/>
<rect x="1367" y="875" width="1" height="1" fill="#a8a8a8"/>
<rect x="1372" y="874" width="2" height="1" fill="#a8a8a8"/>
<rect x="1372" y="875" width="1" height="1" fill="#a8a8a8"/>
<rect x="1377" y="874" width="2" height="1" fill="#a8a8a8"/>
<rect x="1377" y="875" width="1" height="1" fill="#a8a8a8"/>
<rect x="1382" y="874" width="2" height="1" fill="#a8a8a8"/>
<rect x="1382" y="875" width="1" height="1" fill="#a8a8a8"/>
<rect x="1387" y="874" width="2" height="1" fill="#a8a8a8"/>
<rect x="1387" y="875" width="1" height="1" fill="#a8a8a8"/>
<rect x="1392" y="874" width="2" height="1" fill="#a8a8a8"/>
<rect x="1392" y="875" width="1" height="1" fill="#a8a8a8"/>
<rect x="1397" y="874" width="2" height="1" fill="#a8a8a8"/>
<rect x="1397" y="875" width="1" height="1" fill="#a8a8a8"/>
<rect x="1402" y="874" width="2" height="1" fill="#a8a8a8"/>
<rect x="1402" y="875" width="1" height="1" fill="#a8a8a8"/>
<rect x="1407" y="874" width="2" height="1" fill="#a8a8a8"/>
<rect x="1407" y="875" width="1" height="1" fill="#a8a8a8"/>
<rect x="1412" y="874" width="2" height="1" fill="#a8a8a8"/>
<rect x="1412" y="875" width="1" height="1" fill="#a8a8a8"/>
<rect x="1417" y="874" width="2" height="1" fill="#a8a8a8"/>
<rect x="1417" y="875" width="1" height="1" fill="#a8a8a8"/>
<rect x="1422" y="874" width="2" height="1" fill="#a8a8a8"/>
<rect x="1422" y="875" width="1" height="1" fill="#a8a8a8"/>
<rect x="1427" y="874" width="2" height="1" fill="#a8a8a8"/>
<rect x="1427" y="875" width="1" height="1" fill="#a8a8a8"/>
<rect x="1432" y="874" width="2" height="1" fill="#a8a8a8"/>
<rect x="1432" y="875" width="1" height="1" fill="#a8a8a8"/>
<rect x="1437" y="874" width="2" height="1" fill="#a8a8a8"/>
<rect x="1437" y="875" width="1" height="1" fill="#a8a8a8"/>
<rect x="1442" y="874" width="2" height="1" fill="#a8a8a8"/>
<rect x="1442" y="875" width="1" height="1" fill="#a8a8a8"/>
<rect x="1447" y="874" width="2" height="1" fill="#a8a8a8"/>
<rect x="1447" y="875" width="1" height="1" fill="#a8a8a8"/>
<rect x="1452" y="874" width="2" height="1" fill="#a8a8a8"/>
<rect x="1452" y="875" width="1" height="1" fill="#a8a8a8"/>
<rect x="1457" y="874" width="2" height="1" fill="#a8a8a8"/>
<rect x="1457" y="875" width="1" height="1" fill="#a8a8a8"/>
<rect x="1462" y="874" width="2" height="1" fill="#a8a8a8"/>
<rect x="1462" y="875" width="1" height="1" fill="#a8a8a8"/>
<rect x="1467" y="874" width="2" height="1" fill="#a8a8a8"/>
<rect x="1467" y="875" width="1" height="1" fill="#a8a8a8"/>
<rect x="1472" y="874" width="2" height="1" fill="#a8a8a8"/>
<rect x="1472" y="875" width="1" height="1" fill="#a8a8a8"/>
<rect x="1477" y="874" width="2" height="1" fill="#a8a8a8"/>
<rect x="1477" y="875" width="1" height="1" fill="#a8a8a8"/>
<rect x="1482" y="874" width="2" height="1" fill="#a8a8a8"/>
<rect x="1482" y="875" width="1" height="1" fill="#a8a8a8"/>
<rect x="1487" y="874" width="2" height="1" fill="#a8a8a8"/>
<rect x="1487" y="875" width="1" height="1" fill="#a8a8a8"/>
<rect x="1492" y="874" width="2" height="1" fill="#a8a8a8"/>
<rect x="1492" y="875" width="1" height="1" fill="#a8a8a8"/>
<rect x="1497" y="874" width="2" height="1" fill="#a8a8a8"/>
<rect x="1497" y="875" width="1" height="1" fill="#a8a8a8"/>
<rect x="1502" y="874" width="2" height="1" fill="#a8a8a8"/>
<rect x="1502" y="875" width="1" height="1" fill="#a8a8a8"/>
<rect x="1507" y="874" width="2" height="1" fill="#a8a8a8"/>
<rect x="1507" y="875" width="1" height="1" fill="#a8a8a8"/>
<rect x="1512" y="874" width="2" height="1" fill="#a8a8a8"/>
<rect x="1512" y="875" width="1" height="1" fill="#a8a8a8"/>
<rect x="1517" y="874" width="2" height="1" fill="#a8a8a8"/>
<rect x="1517" y="875" width="1" height="1" fill="#a8a8a8"/>
<rect x="1522" y="874" width="2" height="1" fill="#a8a8a8"/>
<rect x="1522" y="875" width="1" height="1" fill="#a8a8a8"/>
<rect x="1527" y="874" width="2" height="1" fill="#a8a8a8"/>
<rect x="1527" y="875" width="1" height="1" fill="#a8a8a8"/>
<rect x="1532" y="874" width="2" height="1" fill="#a8a8a8"/>
<rect x="1532" y="875" width="1" height="1" fill="#a8a8a8"/>
<rect x="1537" y="874" width="2" height="1" fill="#a8a8a8"/>
<rect x="1537" y="875" width="1" height="1" fill="#a8a8a8"/>
<rect x="1542" y="874" width="2" height="1" fill="#a8a8a8"/>
<rect x="1542" y="875" width="1" height="1" fill="#a8a8a8"/>
<rect x="1547" y="874" width="2" height="1" fill="#a8a8a8"/>
<rect x="1547" y="875" width="1" height="1" fill="#a8a8a8"/>
<rect x="1552" y="874" width="2" height="1" fill="#a8a8a8"/>
<rect x="1552" y="875" width="1" height="1" fill="#a8a8a8"/>
<rect x="1557" y="874" width="2" height="1" fill="#a8a8a8"/>
<rect x="1557" y="875" width="1" height="1" fill="#a8a8a8"/>
<rect x="1562" y="874" width="2" height="1" fill="#a8a8a8"/>
<rect x="1562" y="875" width="1" height="1" fill="#a8a8a8"/>
<rect x="1567" y="874" width="2" height="1" fill="#a8a8a8"/>
<rect x="1567" y="875" width="1" height="1" fill="#a8a8a8"/>
<rect x="1572" y="874" width="2" height="1" fill="#a8a8a8"/>
<rect x="1572" y="875" width="1" height="1" fill="#a8a8a8"/>
<rect x="1577" y="874" width="2" height="1" fill="#a8a8a8"/>
<rect x="1577" y="875" width="1" height="1" fill="#a8a8a8"/>
<rect x="1582" y="874" width="2" height="1" fill="#a8a8a8"/>
<rect x="1582" y="875" width="1" height="1" fill="#a8a8a8"/>
<rect x="1587" y="874" width="2" height="1" fill="#a8a8a8"/>
<rect x="1587" y="875" width="1" height="1" fill="#a8a8a8"/>
<rect x="1592" y="874" width="2" height="1" fill="#a8a8a8"/>
<rect x="1592" y="875" width="1" height="1" fill="#a8a8a8"/>
<rect x="1597" y="874" width="2" height="1" fill="#a8a8a8"/>
<rect x="1597" y="875" width="1" height="1" fill="#a8a8a8"/>
<rect x="317" y="878" width="1586" height="270" fill="#ffffff"/>
<g font-family="'Liberation Mono', monospace" font-size="13.333" fill="#000">
<text x="318" y="891.5">/biomed-resimg/projects6/workplace/jaberger/JSON</text>
<text x="318" y="908.5">jaberger@eos(374) jaberger/JSON$ cd ..</text>
<text x="318" y="925.5">/biomed-resimg/projects6/workplace/jaberger</text>
<text x="318" y="942.5">jaberger@eos(375) workplace/jaberger$ cd FVLight/</text>
<text x="318" y="959.5">/biomed-resimg/projects6/workplace/jaberger/FVLight</text>
<text x="318" y="976.5">jaberger@eos(376) jaberger/FVLight$ cd bin/</text>
<text x="318" y="993.5">/biomed-resimg/projects6/workplace/jaberger/FVLight/bin</text>
<text x="318" y="1010.5">jaberger@eos(377) FVLight/bin$ ./FiberViewerLight</text>
<text x="318" y="1044.5">(&lt;unknown&gt;:12287): GLib-GObject-WARNING **: IA__g_object_set_valist: object class `GtkMenuItem' has no property named `label'</text>
<text x="318" y="1078.5">(&lt;unknown&gt;:12287): GLib-GObject-WARNING **: IA__g_object_set_valist: object class `GtkCheckMenuItem' has no property named `label'</text>
<text x="318" y="1095.5">Reading VTK data...</text>
<text x="318" y="1112.5">VTK File read successfuly. 45 fibers read.</text>
</g>
<rect x="318.5" y="1117.5" width="7" height="15" fill="none" stroke="#000"/>
<rect x="1903" y="878" width="16" height="270" fill="url(#dots)"/>
<rect x="1903.5" y="878.5" width="15" height="15" rx="2.5" fill="url(#sb)" stroke="#8c8e94"/>
<path d="M1907.0 888.0 L1915.0 888.0 L1911.0 883.5 Z" fill="#000"/>
<rect x="1903.5" y="1096.5" width="15" height="20" rx="2.5" fill="url(#sb)" stroke="#8c8e94"/>
<rect x="1908" y="1102" width="1" height="1" fill="#a0a0a8"/>
<rect x="1911" y="1102" width="1" height="1" fill="#a0a0a8"/>
<rect x="1914" y="1102" width="1" height="1" fill="#a0a0a8"/>
<rect x="1908" y="1105" width="1" height="1" fill="#a0a0a8"/>
<rect x="1911" y="1105" width="1" height="1" fill="#a0a0a8"/>
<rect x="1914" y="1105" width="1" height="1" fill="#a0a0a8"/>
<rect x="1908" y="1108" width="1" height="1" fill="#a0a0a8"/>
<rect x="1911" y="1108" width="1" height="1" fill="#a0a0a8"/>
<rect x="1914" y="1108" width="1" height="1" fill="#a0a0a8"/>
<rect x="1903.5" y="1117.5" width="15" height="14" rx="2.5" fill="url(#sb)" stroke="#8c8e94"/>
<path d="M1907.0 1126.5 L1915.0 1126.5 L1911.0 1122.0 Z" fill="#000"/>
<rect x="1903.5" y="1132.5" width="15" height="15" rx="2.5" fill="url(#sb)" stroke="#8c8e94"/>
<path d="M1907.0 1138.0 L1915.0 1138.0 L1911.0 1142.5 Z" fill="#000"/>
<rect x="313" y="880" width="1" height="1" fill="#9a9a9a"/>
<rect x="313" y="885" width="1" height="1" fill="#9a9a9a"/>
<rect x="313" y="890" width="1" height="1" fill="#9a9a9a"/>
<rect x="313" y="895" width="1" height="1" fill="#9a9a9a"/>
<rect x="313" y="900" width="1" height="1" fill="#9a9a9a"/>
<rect x="313" y="905" width="1" height="1" fill="#9a9a9a"/>
<rect x="313" y="910" width="1" height="1" fill="#9a9a9a"/>
<rect x="313" y="915" width="1" height="1" fill="#9a9a9a"/>
<rect x="313" y="920" width="1" height="1" fill="#9a9a9a"/>
<rect x="313" y="925" width="1" height="1" fill="#9a9a9a"/>
<rect x="313" y="930" width="1" height="1" fill="#9a9a9a"/>
<rect x="313" y="935" width="1" height="1" fill="#9a9a9a"/>
<rect x="313" y="940" width="1" height="1" fill="#9a9a9a"/>
<rect x="313" y="945" width="1" height="1" fill="#9a9a9a"/>
<rect x="313" y="950" width="1" height="1" fill="#9a9a9a"/>
<rect x="313" y="955" width="1" height="1" fill="#9a9a9a"/>
<rect x="313" y="960" width="1" height="1" fill="#9a9a9a"/>
<rect x="313" y="965" width="1" height="1" fill="#9a9a9a"/>
<rect x="313" y="970" width="1" height="1" fill="#9a9a9a"/>
<rect x="313" y="975" width="1" height="1" fill="#9a9a9a"/>
<rect x="313" y="980" width="1" height="1" fill="#9a9a9a"/>
<rect x="313" y="985" width="1" height="1" fill="#9a9a9a"/>
<rect x="313" y="990" width="1" height="1" fill="#9a9a9a"/>
<rect x="313" y="995" width="1" height="1" fill="#9a9a9a"/>
<rect x="313" y="1000" width="1" height="1" fill="#9a9a9a"/>
<rect x="313" y="1005" width="1" height="1" fill="#9a9a9a"/>
<rect x="313" y="1010" width="1" height="1" fill="#9a9a9a"/>
<rect x="313" y="1015" width="1" height="1" fill="#9a9a9a"/>
<rect x="313" y="1020" width="1" height="1" fill="#9a9a9a"/>
<rect x="313" y="1025" width="1" height="1" fill="#9a9a9a"/>
<rect x="313" y="1030" width="1" height="1" fill="#9a9a9a"/>
<rect x="313" y="1035" width="1" height="1" fill="#9a9a9a"/>
<rect x="313" y="1040" width="1" height="1" fill="#9a9a9a"/>
<rect x="313" y="1045" width="1" height="1" fill="#9a9a9a"/>
<rect x="313" y="1050" width="1" height="1" fill="#9a9a9a"/>
<rect x="313" y="1055" width="1" height="1" fill="#9a9a9a"/>
<rect x="313" y="1060" width="1" height="1" fill="#9a9a9a"/>
<rect x="313" y="1065" width="1" height="1" fill="#9a9a9a"/>
<rect x="313" y="1070" width="1" height="1" fill="#9a9a9a"/>
<rect x="313" y="1075" width="1" height="1" fill="#9a9a9a"/>
<rect x="313" y="1080" width="1" height="1" fill="#9a9a9a"/>
<rect x="313" y="1085" width="1" height="1" fill="#9a9a9a"/>
<rect x="313" y="1090" width="1" height="1" fill="#9a9a9a"/>
<rect x="313" y="1095" width="1" height="1" fill="#9a9a9a"/>
<rect x="313" y="1100" width="1" height="1" fill="#9a9a9a"/>
<rect x="313" y="1105" width="1" height="1" fill="#9a9a9a"/>
<rect x="313" y="1110" width="1" height="1" fill="#9a9a9a"/>
<rect x="313" y="1115" width="1" height="1" fill="#9a9a9a"/>
<rect x="313" y="1120" width="1" height="1" fill="#9a9a9a"/>
<rect x="313" y="1125" width="1" height="1" fill="#9a9a9a"/>
<rect x="313" y="1130" width="1" height="1" fill="#9a9a9a"/>
<rect x="313" y="1135" width="1" height="1" fill="#9a9a9a"/>
<rect x="313" y="1140" width="1" height="1" fill="#9a9a9a"/>
<rect x="313" y="1145" width="1" height="1" fill="#9a9a9a"/>
<rect x="317" y="1148" width="1603" height="26" fill="#efefef"/>
<rect x="317.5" y="1149.5" width="105" height="22" rx="2" fill="#dfe0e4" stroke="#c8c8cc"/>
<rect x="423.5" y="1149.5" width="87" height="22" rx="2" fill="#cfd0d6" stroke="#bcbcc2"/>
<rect x="323.5" y="1153.5" width="12" height="14" fill="#fff" stroke="#222"/><circle cx="330" cy="1160" r="4.3" fill="#8fd0f8" stroke="#333" stroke-width="1.2"/><path d="M333 1163 L337 1167" stroke="#d03a10" stroke-width="2.4"/>
<text x="342" y="1165" font-size="12.7" fill="#000" textLength="76" lengthAdjust="spacingAndGlyphs">Find in Files</text>
<rect x="430.5" y="1154.5" width="13" height="13" fill="#3a6ec8" stroke="#1d3570" transform="rotate(-8 437 1161)"/><path d="M433 1158 L437 1161 L433 1164" stroke="#fff" stroke-width="1" fill="none"/>
<text x="450" y="1166" font-size="12.7" fill="#000" textLength="56" lengthAdjust="spacingAndGlyphs">Terminal</text>
<rect x="24" y="872" width="287" height="301" fill="#efefef"/>
<rect x="25.5" y="872.5" width="285" height="300" rx="2" fill="#ffffff" stroke="#9a9a9a"/>
<rect x="26" y="875" width="267" height="20" fill="#e4f6fd"/>
<text x="45" y="889" font-size="12.7" fill="#000" textLength="123" lengthAdjust="spacingAndGlyphs">matCutterWidget.h</text>
<rect x="26" y="895" width="267" height="20" fill="#d8f3fd"/>
<text x="45" y="909" font-size="12.7" fill="#000" textLength="199" lengthAdjust="spacingAndGlyphs">NormalizedCutGUIControls.cxx</text>
<rect x="26" y="915" width="267" height="20" fill="#eaf7fd"/>
<text x="45" y="929" font-size="12.7" fill="#000" textLength="185" lengthAdjust="spacingAndGlyphs">NormalizedCutGUIControls.h</text>
<rect x="26" y="935" width="267" height="20" fill="#ffffff"/>
<text x="45" y="949" font-size="12.7" fill="#000" textLength="134" lengthAdjust="spacingAndGlyphs">NormalizedCutGUI.ui</text>
<rect x="26" y="955" width="267" height="20" fill="#ffffff"/>
<text x="45" y="969" font-size="12.7" fill="#000" textLength="170" lengthAdjust="spacingAndGlyphs">NormalizedCutMethod.cxx</text>
<rect x="26" y="975" width="267" height="20" fill="#ffffff"/>
<text x="45" y="989" font-size="12.7" fill="#000" textLength="155" lengthAdjust="spacingAndGlyphs">NormalizedCutMethod.h</text>
<rect x="26" y="995" width="267" height="20" fill="#e4f6fd"/>
<text x="45" y="1009" font-size="12.7" fill="#000" textLength="173" lengthAdjust="spacingAndGlyphs">FaAnalysisGUIControls.cxx</text>
<rect x="26" y="1015" width="267" height="20" fill="#eaf7fd"/>
<text x="45" y="1029" font-size="12.7" fill="#000" textLength="159" lengthAdjust="spacingAndGlyphs">FaAnalysisGUIControls.h</text>
<rect x="26" y="1035" width="267" height="20" fill="#d8f3fd"/>
<text x="45" y="1049" font-size="12.7" fill="#000" textLength="94" lengthAdjust="spacingAndGlyphs">AnalyseFA.cxx</text>
<rect x="26" y="1055" width="267" height="20" fill="#ffffff"/>
<text x="45" y="1069" font-size="12.7" fill="#000" textLength="80" lengthAdjust="spacingAndGlyphs">AnalyseFA.h</text>
<rect x="26" y="1075" width="267" height="20" fill="#dcc3dd"/>
<text x="45" y="1089" font-size="12.7" fill="#000" textLength="100" lengthAdjust="spacingAndGlyphs">PlanSetting.cxx</text>
<rect x="26" y="1095" width="267" height="20" fill="#e8e8f4"/>
<text x="45" y="1109" font-size="12.7" fill="#000" textLength="86" lengthAdjust="spacingAndGlyphs">PlanSetting.h</text>
<rect x="26" y="1115" width="267" height="20" fill="#e0f5fd"/>
<text x="45" y="1129" font-size="12.7" fill="#000" textLength="65" lengthAdjust="spacingAndGlyphs">Fibers.cxx</text>
<rect x="26" y="1135" width="267" height="20" fill="#e0f5fd"/>
<text x="45" y="1149" font-size="12.7" fill="#000" textLength="51" lengthAdjust="spacingAndGlyphs">Fibers.h</text>
<rect x="293" y="873" width="16" height="282" fill="#e8e8ea"/>
<rect x="293.5" y="873.5" width="15" height="249" rx="2.5" fill="url(#sb)" stroke="#8c8e94"/>
<rect x="293.5" y="1123.5" width="15" height="15" rx="2.5" fill="url(#sb)" stroke="#8c8e94"/>
<path d="M297.0 1133.0 L305.0 1133.0 L301.0 1128.5 Z" fill="#000"/>
<rect x="293.5" y="1139.5" width="15" height="15" rx="2.5" fill="url(#sb)" stroke="#8c8e94"/>
<path d="M297.0 1145.0 L305.0 1145.0 L301.0 1149.5 Z" fill="#000"/>
<rect x="25" y="1155" width="268" height="16" fill="url(#dots)"/>
<rect x="26.5" y="1155.5" width="15" height="15" rx="2.5" fill="url(#sb)" stroke="#8c8e94"/>
<path d="M36.0 1159.0 L36.0 1167.0 L31.5 1163.0 Z" fill="#000"/>
<rect x="42.5" y="1155.5" width="210" height="15" rx="2.5" fill="url(#sbh)" stroke="#8c8e94"/>
<rect x="138" y="1158" width="1" height="1" fill="#a0a0a8"/>
<rect x="141" y="1158" width="1" height="1" fill="#a0a0a8"/>
<rect x="144" y="1158" width="1" height="1" fill="#a0a0a8"/>
<rect x="147" y="1158" width="1" height="1" fill="#a0a0a8"/>
<rect x="150" y="1158" width="1" height="1" fill="#a0a0a8"/>
<rect x="153" y="1158" width="1" height="1" fill="#a0a0a8"/>
<rect x="138" y="1161" width="1" height="1" fill="#a0a0a8"/>
<rect x="141" y="1161" width="1" height="1" fill="#a0a0a8"/>
<rect x="144" y="1161" width="1" height="1" fill="#a0a0a8"/>
<rect x="147" y="1161" width="1" height="1" fill="#a0a0a8"/>
<rect x="150" y="1161" width="1" height="1" fill="#a0a0a8"/>
<rect x="153" y="1161" width="1" height="1" fill="#a0a0a8"/>
<rect x="138" y="1164" width="1" height="1" fill="#a0a0a8"/>
<rect x="141" y="1164" width="1" height="1" fill="#a0a0a8"/>
<rect x="144" y="1164" width="1" height="1" fill="#a0a0a8"/>
<rect x="147" y="1164" width="1" height="1" fill="#a0a0a8"/>
<rect x="150" y="1164" width="1" height="1" fill="#a0a0a8"/>
<rect x="153" y="1164" width="1" height="1" fill="#a0a0a8"/>
<rect x="261.5" y="1155.5" width="15" height="15" rx="2.5" fill="url(#sb)" stroke="#8c8e94"/>
<path d="M271.0 1159.0 L271.0 1167.0 L266.5 1163.0 Z" fill="#000"/>
<rect x="276.5" y="1155.5" width="15" height="15" rx="2.5" fill="url(#sb)" stroke="#8c8e94"/>
<path d="M282.0 1159.0 L282.0 1167.0 L286.5 1163.0 Z" fill="#000"/>
<rect x="0" y="1173" width="1920" height="1" fill="#3b3b3b"/>
<rect x="0" y="1174" width="1920" height="26" fill="#edeae6"/>
<rect x="1.5" y="1177.5" width="21" height="21" rx="3" fill="url(#task)" stroke="#9c9080"/>
<path d="M5 1190 L12 1184 L20 1187 L13 1194 Z" fill="#4a90d0" stroke="#333" stroke-width="0.8"/><path d="M6 1191 L12 1196 L16 1193" fill="#ddd" stroke="#333" stroke-width="0.8"/>
<rect x="90" y="1176" width="6" height="1" fill="#d5cbbd"/>
<rect x="90" y="1178" width="6" height="1" fill="#d5cbbd"/>
<rect x="90" y="1180" width="6" height="1" fill="#d5cbbd"/>
<rect x="90" y="1182" width="6" height="1" fill="#d5cbbd"/>
<rect x="90" y="1184" width="6" height="1" fill="#d5cbbd"/>
<rect x="90" y="1186" width="6" height="1" fill="#d5cbbd"/>
<rect x="90" y="1188" width="6" height="1" fill="#d5cbbd"/>
<rect x="90" y="1190" width="6" height="1" fill="#d5cbbd"/>
<rect x="90" y="1192" width="6" height="1" fill="#d5cbbd"/>
<rect x="90" y="1194" width="6" height="1" fill="#d5cbbd"/>
<rect x="90" y="1196" width="6" height="1" fill="#d5cbbd"/>
<rect x="90" y="1198" width="6" height="1" fill="#d5cbbd"/>
<rect x="99.5" y="1177.5" width="201" height="21" rx="3" fill="url(#task)" stroke="#9c9080"/>
<rect x="107" y="1181" width="15" height="13" rx="1.5" fill="#555" stroke="#222"/><rect x="109" y="1183" width="11" height="8" fill="#2d3a2d"/>
<text x="128" y="1193" font-size="12.7" fill="#000" textLength="54" lengthAdjust="spacingAndGlyphs">Terminal</text>
<rect x="304.5" y="1177.5" width="201" height="21" rx="3" fill="url(#task)" stroke="#9c9080"/>
<g transform="translate(311,1179)"><path d="M4 6 L11 4 L17 10 L14 12 L4 9 Z" fill="#f0f0f0" stroke="#111" stroke-width="1"/><path d="M3 9 L14 13 L17 11" fill="none" stroke="#111" stroke-width="1"/><path d="M3 12 L15 16" fill="none" stroke="#111" stroke-width="1.6"/><path d="M4 12.5 L8 14" stroke="#e8b020" stroke-width="1.6"/><path d="M9 14 L13 15.5" stroke="#6a9ae0" stroke-width="1.4"/><path d="M5 7 L11 6" stroke="#bbb" stroke-width="1"/></g>
<text x="333" y="1193" font-size="12.7" fill="#000" textLength="167" lengthAdjust="spacingAndGlyphs">Default Session: main.c...</text>
<rect x="509.5" y="1177.5" width="201" height="21" rx="3" fill="url(#task)" stroke="#9c9080"/>
<path d="M517 1184 L527 1181 L532 1188 L532 1195 L521 1196 L517 1189 Z" fill="#777" stroke="#222" stroke-width="1"/><rect x="521" y="1184" width="7" height="4" fill="#e8c070"/>
<text x="538" y="1193" font-size="12.7" fill="#000" textLength="108" lengthAdjust="spacingAndGlyphs">bin - File Browser</text>
<rect x="714.5" y="1177.5" width="201" height="21" rx="3" fill="url(#task)" stroke="#9c9080"/>
<rect x="722" y="1180" width="13" height="16" fill="#fafafa" stroke="#999"/><path d="M726 1194 L736 1184" stroke="#e0a030" stroke-width="3"/>
<text x="743" y="1193" font-size="12.7" fill="#000" textLength="166" lengthAdjust="spacingAndGlyphs">[test.json (/projects6/wo...</text>
<rect x="919.5" y="1177.5" width="201" height="21" rx="3" fill="url(#task)" stroke="#9c9080"/>
<rect x="927.5" y="1181.5" width="15" height="13" fill="#fff" stroke="#333"/><rect x="928" y="1182" width="14" height="3" fill="#aaa"/>
<text x="948" y="1193" font-size="12.7" fill="#000" textLength="153" lengthAdjust="spacingAndGlyphs">[Fiber Viewer 1.2.3 (Qt)]</text>
<rect x="1124.5" y="1177.5" width="201" height="21" rx="3" fill="url(#task)" stroke="#9c9080"/>
<circle cx="1140" cy="1188" r="7" fill="#e88a20"/><circle cx="1141" cy="1187" r="4" fill="#5a6fb8"/><path d="M1134 1186 Q1138 1180 1144 1182" stroke="#f6c040" stroke-width="2" fill="none"/>
<text x="1153" y="1193" font-size="12.7" fill="#000" textLength="168" lengthAdjust="spacingAndGlyphs">[Gmail - Boîte de récepti...</text>
<rect x="1329.5" y="1177.5" width="201" height="21" rx="3" fill="url(#task)" stroke="#9c9080"/>
<circle cx="1345" cy="1188" r="7" fill="#e88a20"/><circle cx="1346" cy="1187" r="4" fill="#5a6fb8"/><path d="M1339 1186 Q1343 1180 1349 1182" stroke="#f6c040" stroke-width="2" fill="none"/>
<text x="1358" y="1193" font-size="12.7" fill="#000" textLength="168" lengthAdjust="spacingAndGlyphs">[Affichage du contenu d...</text>
<rect x="1534.5" y="1177.5" width="201" height="21" rx="3" fill="url(#taskact)" stroke="#9c9080"/>
<rect x="1542.5" y="1181.5" width="15" height="13" fill="#fff" stroke="#333"/><rect x="1543" y="1182" width="14" height="3" fill="#aaa"/>
<text x="1563" y="1193" font-size="12.7" fill="#000" textLength="104" lengthAdjust="spacingAndGlyphs">FiberViewerLight</text>
<rect x="1741" y="1180" width="19" height="17" fill="#1e3c8a" stroke="#111"/><path d="M1744 1185 L1748 1188 L1744 1191" stroke="#fff" fill="none"/><rect x="1749" y="1190" width="4" height="1" fill="#fff"/>
<path d="M1765 1182 L1772 1182 L1774 1184 L1783 1184 L1783 1197 L1765 1197 Z" fill="#3a78c8" stroke="#1e4a90" stroke-width="0.8"/>
<rect x="1787" y="1179" width="31" height="18" fill="#5aa0e8"/>
<path d="M1790 1182 L1805 1182 L1805 1190 L1790 1190 Z" fill="#a8d0f4"/><path d="M1800 1190 L1810 1195 L1806 1192" stroke="#222" fill="none"/>
<rect x="1820" y="1179" width="32" height="18" fill="#b4aa9a"/>
<rect x="1853" y="1179" width="32" height="18" fill="#b4aa9a"/>
<rect x="1886" y="1179" width="33" height="18" fill="#b4aa9a"/>
<path d="M0 872 L0 56 Q0 49 7 49 L1168 49 Q1175 49 1175 56 L1175 872 Z" fill="#2a2a2a"/>
<path d="M1 72 L1 57 Q1 50 8 50 L1167 50 Q1174 50 1174 57 L1174 72 Z" fill="url(#blue)"/>
<rect x="1" y="72" width="1173" height="1" fill="#1f3f63"/>
<rect x="1" y="73" width="1173" height="798" fill="#edeae5"/>
<rect x="1" y="73" width="1173" height="1" fill="#f7f3ee"/>
<rect x="7.5" y="55.5" width="13" height="10" fill="#eeeeee" stroke="#264a72"/>
<text x="505" y="67" font-size="12.7" fill="#1d3d60" font-weight="bold" textLength="126" lengthAdjust="spacingAndGlyphs">FiberViewerLight</text>
<text x="504" y="66" font-size="12.7" fill="#ffffff" font-weight="bold" textLength="126" lengthAdjust="spacingAndGlyphs">FiberViewerLight</text>
<rect x="1112.5" y="52.5" width="17" height="17" rx="4" fill="none" stroke="#2d5f96"/>
<rect x="1116" y="63" width="9" height="2" fill="#fff"/>
<rect x="1132.5" y="52.5" width="17" height="17" rx="4" fill="none" stroke="#2d5f96"/>
<rect x="1137" y="57" width="8" height="8" fill="none" stroke="#fff" stroke-width="1.6"/>
<rect x="1152.5" y="52.5" width="17" height="17" rx="4" fill="none" stroke="#2d5f96"/>
<path d="M1157 57 L1164 64 M1164 57 L1157 64" stroke="#fff" stroke-width="2.2"/>
<text x="16" y="99" font-size="12.7" fill="#000" font-weight="bold" textLength="164" lengthAdjust="spacingAndGlyphs">Fiber Viewer Light 1.0</text>
<text x="33" y="122" font-size="12.7" fill="#000" textLength="118" lengthAdjust="spacingAndGlyphs">Select input/output</text>
<rect x="33" y="134" width="273" height="1.3" fill="#000"/>
<text x="33" y="159" font-size="12.7" fill="#000" textLength="60" lengthAdjust="spacingAndGlyphs">VTK Input</text>
<rect x="112.5" y="142.5" width="161" height="24" rx="3" fill="#fff" stroke="#867a6a"/>
<text x="113" y="159" font-size="12.7" fill="#000" textLength="157" lengthAdjust="spacingAndGlyphs">nitrc_files/Atlas/Genu.vtk</text>
<rect x="282.5" y="143.5" width="23" height="22" rx="3" fill="url(#btn)" stroke="#8a7f72"/>
<text x="288" y="161" font-size="12.7" fill="#000" textLength="12" lengthAdjust="spacingAndGlyphs">...</text>
<text x="33" y="192" font-size="12.7" fill="#000" textLength="72" lengthAdjust="spacingAndGlyphs">VTK Output</text>
<rect x="112.5" y="175.5" width="161" height="24" rx="3" fill="#fff" stroke="#867a6a"/>
<rect x="282.5" y="176.5" width="23" height="22" rx="3" fill="url(#btn)" stroke="#8a7f72"/>
<text x="288" y="194" font-size="12.7" fill="#000" textLength="12" lengthAdjust="spacingAndGlyphs">...</text>
<text x="33" y="220" font-size="12.7" fill="#000" textLength="69" lengthAdjust="spacingAndGlyphs">Processing</text>
<rect x="33" y="231" width="273" height="1.3" fill="#000"/>
<rect x="34.5" y="241.5" width="271" height="23" rx="3" fill="url(#btn)" stroke="#8a7f72"/>
<text x="149.0" y="257" font-size="12.7" fill="#000" textLength="42" lengthAdjust="spacingAndGlyphs">Length</text>
<rect x="34.5" y="274.5" width="271" height="23" rx="3" fill="url(#btn)" stroke="#8a7f72"/>
<text x="147.5" y="290" font-size="12.7" fill="#000" textLength="45" lengthAdjust="spacingAndGlyphs">Gravity</text>
<rect x="34.5" y="307.5" width="271" height="23" rx="3" fill="url(#btn)" stroke="#8a7f72"/>
<text x="138.5" y="323" font-size="12.7" fill="#000" textLength="63" lengthAdjust="spacingAndGlyphs">Hausdorff</text>
<rect x="34.5" y="340.5" width="271" height="23" rx="3" fill="url(#btn)" stroke="#8a7f72"/>
<text x="153.0" y="356" font-size="12.7" fill="#000" textLength="34" lengthAdjust="spacingAndGlyphs">Mean</text>
<rect x="34.5" y="373.5" width="271" height="23" rx="3" fill="url(#btn)" stroke="#8a7f72"/>
<text x="120.5" y="389" font-size="12.7" fill="#000" textLength="99" lengthAdjust="spacingAndGlyphs">Normalized Cut</text>
<text x="33" y="417" font-size="12.7" fill="#000" textLength="66" lengthAdjust="spacingAndGlyphs">Navigation</text>
<rect x="33" y="428" width="273" height="1.3" fill="#000"/>
<rect x="34.5" y="437.5" width="131" height="24" rx="3" fill="#ebe8e3" stroke="#bdb3a6"/>
<text x="84" y="454" font-size="12.7" fill="#b1aba3" textLength="33" lengthAdjust="spacingAndGlyphs">Undo</text>
<rect x="174.5" y="437.5" width="131" height="24" rx="3" fill="#ebe8e3" stroke="#bdb3a6"/>
<text x="224" y="454" font-size="12.7" fill="#b1aba3" textLength="32" lengthAdjust="spacingAndGlyphs">Redo</text>
<rect x="34.5" y="470.5" width="271" height="23" rx="3" fill="url(#btn)" stroke="#8a7f72"/>
<text x="128" y="487" font-size="12.7" fill="#000" textLength="84" lengthAdjust="spacingAndGlyphs">Save VTK File</text>
<rect x="355" y="93" width="795" height="721" fill="#999999"/>
<g id="fibers" fill="none" stroke="#e40000" stroke-width="0.85">
<path d="M586.0 262.0 C588.0 264.3 594.4 271.3 598.0 276.0 C601.6 280.7 604.8 286.0 607.5 290.0 C610.2 294.0 613.2 296.3 614.0 300.0 C614.8 303.7 612.8 308.3 612.0 312.0 C611.2 315.7 611.4 318.3 609.0 322.0 C606.6 325.7 600.7 330.8 597.5 334.0 C594.3 337.2 592.8 338.4 590.0 341.0 C587.2 343.6 584.3 346.0 581.0 349.5 C577.7 353.0 573.2 357.8 570.0 362.0 C566.8 366.2 564.3 370.3 562.0 375.0 C559.7 379.7 557.5 385.0 556.0 390.0 C554.5 395.0 552.8 399.5 553.0 405.0 C553.2 410.5 554.2 418.0 557.0 423.0 C559.8 428.0 565.3 431.0 570.0 435.0 C574.7 439.0 580.0 442.3 585.0 447.0 C590.0 451.7 595.3 457.5 600.0 463.0 C604.7 468.5 609.5 473.0 613.0 480.0 C616.5 487.0 616.5 493.7 621.0 505.0 C625.5 516.3 633.9 532.2 639.9 548.0 C645.9 563.8 649.9 585.2 657.0 600.0 C664.1 614.8 671.1 624.0 682.4 636.9 C693.7 649.8 710.9 666.3 724.7 677.5 C738.6 688.7 752.4 696.5 765.4 704.1 C778.4 711.7 791.1 718.8 802.9 722.9 C814.7 727.0 826.6 729.5 836.0 728.5 C845.4 727.5 852.8 721.7 859.2 716.7 C865.6 711.7 871.7 711.2 874.6 698.3 C877.5 685.4 876.6 655.7 876.6 639.4 C876.6 623.0 874.7 613.2 874.7 600.0 C874.6 586.8 876.0 573.5 876.3 560.1 C876.5 546.8 876.2 533.4 876.2 520.0 C876.1 506.6 876.2 491.7 876.0 480.0 C875.8 468.3 875.5 461.7 875.0 450.0 C874.5 438.3 873.8 423.3 873.0 410.0 C872.2 396.7 871.2 382.5 870.0 370.0 C868.8 357.5 867.0 343.9 866.0 335.0 C865.0 326.1 865.1 322.8 864.3 316.3 C863.5 309.8 862.4 302.1 861.3 296.0 C860.2 289.9 859.6 284.9 857.5 279.5 C855.4 274.1 851.8 268.3 848.5 263.8 C845.2 259.2 839.4 254.0 837.6 252.0"/>
<path d="M586.0 262.0 C588.0 264.3 594.4 271.3 598.0 276.0 C601.6 280.7 604.8 286.0 607.5 290.0 C610.2 294.0 613.2 296.3 614.0 300.0 C614.8 303.7 612.8 308.3 612.0 312.0 C611.2 315.7 611.4 318.3 609.0 322.0 C606.6 325.7 600.7 330.8 597.5 334.0 C594.3 337.2 592.8 338.4 590.0 341.0 C587.2 343.6 584.3 346.0 581.0 349.5 C577.7 353.0 573.2 357.8 570.0 362.0 C566.8 366.2 564.3 370.3 562.0 375.0 C559.7 379.7 557.5 385.0 556.0 390.0 C554.5 395.0 552.8 399.5 553.0 405.0 C553.2 410.5 554.2 418.0 557.0 423.0 C559.8 428.0 565.3 431.0 570.0 435.0 C574.7 439.0 580.0 442.3 585.0 447.0 C590.0 451.7 595.3 457.5 600.0 463.0 C604.7 468.5 609.5 473.0 613.0 480.0 C616.5 487.0 616.4 493.7 621.0 505.0 C625.6 516.3 634.2 532.2 640.4 548.0 C646.5 563.8 651.0 585.2 657.8 600.0 C664.7 614.8 670.7 624.0 681.7 637.0 C692.6 650.0 709.5 666.8 723.5 678.0 C737.4 689.2 752.0 697.0 765.5 704.0 C778.9 711.1 792.3 716.9 804.0 720.2 C815.8 723.4 826.9 724.6 836.0 723.6 C845.1 722.6 851.9 718.1 858.4 714.2 C865.0 710.2 871.9 712.0 875.5 699.8 C879.1 687.6 879.8 657.6 880.0 641.0 C880.2 624.4 877.6 613.5 876.8 600.0 C875.9 586.5 875.3 573.6 875.0 560.3 C874.6 546.9 874.4 533.4 874.6 520.0 C874.8 506.6 875.9 491.7 876.0 480.0 C876.1 468.3 875.5 461.7 875.0 450.0 C874.5 438.3 873.8 423.3 873.0 410.0 C872.2 396.7 871.2 382.5 870.0 370.0 C868.8 357.5 867.0 343.9 866.0 335.0 C865.0 326.1 865.1 322.8 864.3 316.3 C863.5 309.8 862.4 302.1 861.3 296.0 C860.2 289.9 859.6 284.9 857.5 279.5 C855.4 274.1 851.8 268.3 848.5 263.8 C845.2 259.2 839.4 254.0 837.6 252.0"/>
<path d="M620.4 309.8 C619.5 310.8 616.9 313.8 615.0 316.0 C613.1 318.2 612.0 319.8 609.0 323.0 C606.0 326.2 600.3 331.8 597.0 335.0 C593.7 338.2 591.8 339.3 589.0 342.0 C586.2 344.7 583.3 347.3 580.0 351.0 C576.7 354.7 572.2 359.7 569.0 364.0 C565.8 368.3 563.2 372.3 561.0 377.0 C558.8 381.7 556.8 387.2 555.5 392.0 C554.2 396.8 553.1 400.7 553.5 406.0 C553.9 411.3 555.1 419.0 558.0 424.0 C560.9 429.0 566.3 432.0 571.0 436.0 C575.7 440.0 581.0 443.3 586.0 448.0 C591.0 452.7 596.3 458.5 601.0 464.0 C605.7 469.5 610.5 474.2 614.0 481.0 C617.5 487.8 617.2 493.8 622.0 505.0 C626.8 516.2 636.1 532.3 642.9 548.1 C649.6 564.0 655.9 585.2 662.6 600.0 C669.3 614.8 673.2 623.7 683.0 636.9 C692.9 650.0 708.2 667.2 721.6 678.8 C734.9 690.3 749.4 698.9 763.1 706.1 C776.7 713.2 791.3 719.0 803.4 721.7 C815.6 724.3 827.0 723.8 836.0 721.9 C845.0 720.0 851.1 714.7 857.3 710.2 C863.4 705.8 869.3 706.9 872.8 695.2 C876.3 683.5 877.5 656.0 878.3 640.2 C879.1 624.3 877.8 613.3 877.5 600.0 C877.2 586.7 877.1 573.4 876.6 560.1 C876.1 546.8 874.8 533.3 874.6 520.0 C874.3 506.7 875.1 491.7 875.0 480.0 C874.9 468.3 874.8 461.7 874.0 450.0 C873.2 438.3 871.3 423.3 870.0 410.0 C868.7 396.7 867.3 382.5 866.0 370.0 C864.7 357.5 863.0 343.3 862.0 335.0 C861.0 326.7 860.8 326.2 859.8 320.0 C858.8 313.8 857.4 304.0 856.0 297.5 C854.6 291.0 854.0 286.0 851.5 281.0 C849.0 276.0 846.2 272.3 841.0 267.5 C835.8 262.7 823.5 254.6 820.0 252.0"/>
<path d="M620.4 309.8 C619.5 310.8 616.9 313.8 615.0 316.0 C613.1 318.2 612.0 319.8 609.0 323.0 C606.0 326.2 600.3 331.8 597.0 335.0 C593.7 338.2 591.8 339.3 589.0 342.0 C586.2 344.7 583.3 347.3 580.0 351.0 C576.7 354.7 572.2 359.7 569.0 364.0 C565.8 368.3 563.2 372.3 561.0 377.0 C558.8 381.7 556.8 387.2 555.5 392.0 C554.2 396.8 553.1 400.7 553.5 406.0 C553.9 411.3 555.1 419.0 558.0 424.0 C560.9 429.0 566.3 432.0 571.0 436.0 C575.7 440.0 581.0 443.3 586.0 448.0 C591.0 452.7 596.3 458.5 601.0 464.0 C605.7 469.5 610.5 474.2 614.0 481.0 C617.5 487.8 617.4 493.8 622.0 505.0 C626.6 516.2 635.1 532.2 641.9 548.1 C648.7 563.9 655.2 585.2 662.7 600.0 C670.2 614.8 676.3 623.8 686.9 636.6 C697.4 649.4 712.9 665.7 726.1 676.9 C739.3 688.1 753.1 696.3 766.0 703.6 C779.0 710.9 792.2 717.3 803.9 720.6 C815.5 724.0 827.0 725.0 836.0 723.8 C845.0 722.5 851.8 717.4 858.1 713.0 C864.4 708.5 870.6 709.3 873.9 697.1 C877.1 684.9 877.5 656.1 877.7 639.9 C877.9 623.7 875.9 613.3 875.3 600.0 C874.8 586.7 874.7 573.6 874.5 560.3 C874.2 547.0 873.9 533.4 874.0 520.0 C874.1 506.6 875.0 491.7 875.0 480.0 C875.0 468.3 874.8 461.7 874.0 450.0 C873.2 438.3 871.3 423.3 870.0 410.0 C868.7 396.7 867.3 382.5 866.0 370.0 C864.7 357.5 863.0 343.3 862.0 335.0 C861.0 326.7 860.8 326.2 859.8 320.0 C858.8 313.8 857.4 304.0 856.0 297.5 C854.6 291.0 854.0 286.0 851.5 281.0 C849.0 276.0 846.2 272.3 841.0 267.5 C835.8 262.7 823.5 254.6 820.0 252.0"/>
<path d="M586.5 289.0 C588.4 291.2 594.8 297.8 598.0 302.0 C601.2 306.2 604.2 311.2 606.0 314.5 C607.8 317.8 610.7 318.4 609.0 322.0 C607.3 325.6 600.0 332.0 596.0 336.0 C592.0 340.0 588.7 342.5 585.0 346.0 C581.3 349.5 577.2 353.0 574.0 357.0 C570.8 361.0 568.2 365.3 566.0 370.0 C563.8 374.7 561.5 380.0 561.0 385.0 C560.5 390.0 562.0 395.2 563.0 400.0 C564.0 404.8 564.7 409.5 567.0 414.0 C569.3 418.5 572.8 422.7 577.0 427.0 C581.2 431.3 587.2 435.3 592.0 440.0 C596.8 444.7 601.8 449.7 606.0 455.0 C610.2 460.3 614.0 466.2 617.0 472.0 C620.0 477.8 622.3 484.5 624.0 490.0 C625.7 495.5 623.2 495.3 627.0 505.0 C630.8 514.7 640.2 532.4 646.9 548.3 C653.6 564.1 660.7 585.3 667.2 600.0 C673.7 614.7 676.8 623.6 686.0 636.7 C695.2 649.7 709.6 666.8 722.5 678.4 C735.3 690.0 749.6 698.9 763.1 706.1 C776.6 713.2 791.4 719.0 803.6 721.3 C815.7 723.7 827.2 722.5 836.0 720.2 C844.8 717.9 850.7 712.3 856.5 707.7 C862.4 703.1 867.7 703.8 871.1 692.4 C874.6 681.1 876.0 655.0 877.0 639.5 C878.0 624.1 877.1 613.2 877.0 600.0 C876.8 586.8 876.6 573.5 876.0 560.2 C875.3 546.8 873.5 533.4 873.1 520.0 C872.6 506.6 873.2 491.7 873.0 480.0 C872.8 468.3 872.7 461.7 872.0 450.0 C871.3 438.3 870.2 423.3 869.0 410.0 C867.8 396.7 866.3 383.3 865.0 370.0 C863.7 356.7 861.8 338.0 861.0 330.0 C860.2 322.0 861.2 327.0 860.5 322.0 C859.8 317.0 858.4 306.5 857.0 300.0 C855.6 293.5 854.4 288.2 852.0 283.0 C849.6 277.8 846.3 273.7 842.5 269.0 C838.7 264.3 831.2 257.3 829.0 255.0"/>
<path d="M586.5 289.0 C588.4 291.2 594.8 297.8 598.0 302.0 C601.2 306.2 604.2 311.2 606.0 314.5 C607.8 317.8 610.7 318.4 609.0 322.0 C607.3 325.6 600.0 332.0 596.0 336.0 C592.0 340.0 588.7 342.5 585.0 346.0 C581.3 349.5 577.2 353.0 574.0 357.0 C570.8 361.0 568.2 365.3 566.0 370.0 C563.8 374.7 561.5 380.0 561.0 385.0 C560.5 390.0 562.0 395.2 563.0 400.0 C564.0 404.8 564.7 409.5 567.0 414.0 C569.3 418.5 572.8 422.7 577.0 427.0 C581.2 431.3 587.2 435.3 592.0 440.0 C596.8 444.7 601.8 449.7 606.0 455.0 C610.2 460.3 614.0 466.2 617.0 472.0 C620.0 477.8 622.3 484.5 624.0 490.0 C625.7 495.5 623.1 495.3 627.0 505.0 C630.9 514.7 640.5 532.5 647.4 548.3 C654.3 564.1 661.8 585.3 668.2 600.0 C674.6 614.7 676.6 623.6 685.6 636.7 C694.6 649.8 709.1 667.1 722.3 678.5 C735.4 689.8 750.8 698.3 764.6 704.8 C778.4 711.4 793.2 715.7 805.1 717.8 C817.0 719.9 827.4 718.8 836.0 717.4 C844.6 715.9 850.6 712.4 856.9 709.0 C863.2 705.6 870.2 708.4 873.8 697.0 C877.5 685.6 878.7 656.6 878.8 640.4 C878.9 624.3 875.8 613.3 874.5 600.0 C873.2 586.7 871.7 574.0 871.3 560.6 C870.8 547.3 871.4 533.4 871.7 520.0 C872.0 506.6 873.0 491.7 873.0 480.0 C873.0 468.3 872.7 461.7 872.0 450.0 C871.3 438.3 870.2 423.3 869.0 410.0 C867.8 396.7 866.3 383.3 865.0 370.0 C863.7 356.7 861.8 338.0 861.0 330.0 C860.2 322.0 861.2 327.0 860.5 322.0 C859.8 317.0 858.4 306.5 857.0 300.0 C855.6 293.5 854.4 288.2 852.0 283.0 C849.6 277.8 846.3 273.7 842.5 269.0 C838.7 264.3 831.2 257.3 829.0 255.0"/>
<path d="M593.8 328.0 C591.9 329.6 585.9 333.7 582.5 337.5 C579.1 341.3 576.1 346.0 573.5 351.0 C570.9 356.0 568.7 361.8 566.8 367.5 C564.8 373.2 562.5 379.4 562.0 385.0 C561.5 390.6 563.0 396.0 564.0 401.0 C565.0 406.0 565.7 410.5 568.0 415.0 C570.3 419.5 573.8 423.7 578.0 428.0 C582.2 432.3 588.2 436.3 593.0 441.0 C597.8 445.7 602.8 450.7 607.0 456.0 C611.2 461.3 615.0 467.3 618.0 473.0 C621.0 478.7 623.3 484.7 625.0 490.0 C626.7 495.3 624.6 495.3 628.0 505.0 C631.4 514.7 639.5 532.4 645.4 548.2 C651.3 564.1 656.3 585.3 663.2 600.0 C670.1 614.7 676.1 623.9 686.8 636.6 C697.4 649.3 713.6 665.6 727.1 676.5 C740.6 687.4 755.0 695.2 768.0 701.9 C781.1 708.5 794.2 714.0 805.6 716.6 C816.9 719.3 827.5 719.4 836.0 717.8 C844.5 716.3 850.6 711.8 856.5 707.5 C862.3 703.2 867.8 703.5 870.9 692.1 C874.1 680.6 874.8 654.2 875.5 638.8 C876.1 623.5 875.0 613.1 874.8 600.0 C874.7 586.9 875.0 573.6 874.6 560.3 C874.1 547.0 872.8 533.4 872.2 520.0 C871.6 506.6 871.4 491.7 871.0 480.0 C870.6 468.3 871.0 461.7 870.0 450.0 C869.0 438.3 866.7 423.3 865.0 410.0 C863.3 396.7 861.4 382.5 860.0 370.0 C858.6 357.5 857.7 343.3 856.8 335.0 C855.9 326.7 855.5 325.0 854.5 320.0 C853.5 315.0 852.2 309.8 850.8 305.0 C849.4 300.2 848.8 296.1 846.3 291.5 C843.8 286.9 839.7 281.6 835.8 277.3 C831.9 273.1 825.1 267.9 823.0 266.0"/>
<path d="M593.8 328.0 C591.9 329.6 585.9 333.7 582.5 337.5 C579.1 341.3 576.1 346.0 573.5 351.0 C570.9 356.0 568.7 361.8 566.8 367.5 C564.8 373.2 562.5 379.4 562.0 385.0 C561.5 390.6 563.0 396.0 564.0 401.0 C565.0 406.0 565.7 410.5 568.0 415.0 C570.3 419.5 573.8 423.7 578.0 428.0 C582.2 432.3 588.2 436.3 593.0 441.0 C597.8 445.7 602.8 450.7 607.0 456.0 C611.2 461.3 615.0 467.3 618.0 473.0 C621.0 478.7 623.3 484.7 625.0 490.0 C626.7 495.3 624.2 495.3 628.0 505.0 C631.8 514.7 640.6 532.5 647.5 548.3 C654.5 564.1 662.3 585.4 669.8 600.0 C677.3 614.6 682.8 623.6 692.8 636.2 C702.8 648.7 717.4 664.4 730.0 675.3 C742.7 686.2 756.0 694.3 768.5 701.5 C781.0 708.6 793.6 714.9 804.9 718.2 C816.1 721.5 827.2 722.6 836.0 721.4 C844.8 720.3 851.4 715.5 857.6 711.2 C863.7 706.8 869.7 707.3 872.8 695.3 C876.0 683.3 876.2 655.2 876.5 639.3 C876.7 623.4 874.9 613.1 874.2 600.0 C873.5 586.9 873.1 573.9 872.3 560.5 C871.5 547.2 870.0 533.4 869.3 520.0 C868.6 506.6 868.6 491.7 868.0 480.0 C867.4 468.3 867.0 460.0 866.0 450.0 C865.0 440.0 863.8 431.7 862.0 420.0 C860.2 408.3 857.0 391.7 855.0 380.0 C853.0 368.3 851.6 357.5 850.0 350.0 C848.4 342.5 847.0 339.4 845.5 335.0 C844.0 330.6 843.6 328.5 841.0 323.8 C838.4 319.0 833.8 310.9 829.8 306.5 C825.8 302.1 820.0 299.9 817.0 297.5 C814.0 295.1 814.2 294.2 811.8 292.0 C809.4 289.8 810.0 289.5 802.8 284.0 C795.6 278.5 774.3 263.1 768.6 258.9"/>
<path d="M624.5 309.8 C623.2 311.0 619.4 314.6 617.0 317.0 C614.6 319.4 613.2 320.8 610.0 324.0 C606.8 327.2 602.0 332.2 598.0 336.0 C594.0 339.8 589.7 343.2 586.0 347.0 C582.3 350.8 578.8 354.8 576.0 359.0 C573.2 363.2 570.7 367.3 569.0 372.0 C567.3 376.7 566.5 382.3 566.0 387.0 C565.5 391.7 565.3 395.3 566.0 400.0 C566.7 404.7 567.5 410.5 570.0 415.0 C572.5 419.5 576.7 422.7 581.0 427.0 C585.3 431.3 591.2 436.0 596.0 441.0 C600.8 446.0 605.8 451.7 610.0 457.0 C614.2 462.3 617.8 466.7 621.0 473.0 C624.2 479.3 627.2 489.7 629.0 495.0 C630.8 500.3 628.4 496.1 632.0 505.0 C635.6 513.9 643.9 532.6 650.3 548.4 C656.7 564.3 663.5 585.4 670.3 600.0 C677.2 614.6 681.8 623.6 691.5 636.3 C701.2 648.9 715.9 664.9 728.5 675.9 C741.2 686.9 754.7 695.2 767.3 702.5 C780.0 709.7 793.1 715.9 804.5 719.1 C815.9 722.3 827.2 723.0 836.0 721.5 C844.8 720.0 851.3 714.9 857.2 710.1 C863.2 705.4 868.7 705.0 871.5 693.1 C874.3 681.1 874.2 653.7 874.3 638.2 C874.3 622.7 872.6 612.9 871.9 600.0 C871.3 587.1 871.1 574.0 870.6 560.7 C870.0 547.4 869.2 533.5 868.8 520.0 C868.4 506.5 868.5 491.7 868.0 480.0 C867.5 468.3 867.0 460.0 866.0 450.0 C865.0 440.0 863.8 431.7 862.0 420.0 C860.2 408.3 857.0 391.7 855.0 380.0 C853.0 368.3 851.6 357.5 850.0 350.0 C848.4 342.5 847.0 339.4 845.5 335.0 C844.0 330.6 843.6 328.5 841.0 323.8 C838.4 319.0 833.8 310.9 829.8 306.5 C825.8 302.1 820.0 299.9 817.0 297.5 C814.0 295.1 814.2 294.2 811.8 292.0 C809.4 289.8 810.0 289.5 802.8 284.0 C795.6 278.5 774.3 263.1 768.6 258.9"/>
<path d="M598.0 312.0 C599.4 313.8 606.3 319.0 606.5 322.5 C606.7 326.0 602.1 329.2 599.0 333.0 C595.9 336.8 591.5 341.0 588.0 345.0 C584.5 349.0 580.8 352.8 578.0 357.0 C575.2 361.2 572.8 365.3 571.0 370.0 C569.2 374.7 567.7 380.0 567.0 385.0 C566.3 390.0 566.2 395.0 567.0 400.0 C567.8 405.0 569.3 410.3 572.0 415.0 C574.7 419.7 578.7 423.5 583.0 428.0 C587.3 432.5 593.2 437.0 598.0 442.0 C602.8 447.0 607.8 452.7 612.0 458.0 C616.2 463.3 619.8 467.8 623.0 474.0 C626.2 480.2 629.2 489.8 631.0 495.0 C632.8 500.2 630.8 496.1 634.0 505.0 C637.2 513.9 644.8 532.6 650.4 548.4 C655.9 564.3 660.4 585.3 667.0 600.0 C673.7 614.7 679.7 623.8 690.3 636.4 C700.9 648.9 717.3 664.4 730.6 675.0 C744.0 685.6 757.8 693.1 770.3 699.9 C782.8 706.8 794.8 712.8 805.7 716.2 C816.7 719.6 827.4 721.2 836.0 720.2 C844.6 719.2 851.4 714.8 857.2 710.1 C863.0 705.4 868.4 704.2 870.9 692.0 C873.4 679.9 872.3 652.5 872.1 637.2 C871.9 621.9 870.0 612.7 869.6 600.0 C869.1 587.3 869.6 574.2 869.3 560.8 C869.0 547.5 868.3 533.5 867.5 520.0 C866.8 506.5 865.8 491.7 865.0 480.0 C864.2 468.3 863.8 458.3 863.0 450.0 C862.2 441.7 862.2 439.2 860.0 430.0 C857.8 420.8 853.0 406.7 850.0 395.0 C847.0 383.3 843.9 370.0 842.0 360.0 C840.1 350.0 840.0 340.7 838.8 335.0 C837.6 329.3 836.9 329.5 835.0 326.0 C833.1 322.5 830.0 317.7 827.5 314.0 C825.0 310.3 822.6 307.0 820.0 304.0 C817.4 301.0 814.8 298.4 812.0 296.0 C809.2 293.6 809.7 294.6 803.5 289.3 C797.3 284.0 779.8 268.2 775.0 264.0"/>
<path d="M598.0 312.0 C599.4 313.8 606.3 319.0 606.5 322.5 C606.7 326.0 602.1 329.2 599.0 333.0 C595.9 336.8 591.5 341.0 588.0 345.0 C584.5 349.0 580.8 352.8 578.0 357.0 C575.2 361.2 572.8 365.3 571.0 370.0 C569.2 374.7 567.7 380.0 567.0 385.0 C566.3 390.0 566.2 395.0 567.0 400.0 C567.8 405.0 569.3 410.3 572.0 415.0 C574.7 419.7 578.7 423.5 583.0 428.0 C587.3 432.5 593.2 437.0 598.0 442.0 C602.8 447.0 607.8 452.7 612.0 458.0 C616.2 463.3 619.8 467.8 623.0 474.0 C626.2 480.2 629.2 489.8 631.0 495.0 C632.8 500.2 630.8 496.1 634.0 505.0 C637.2 513.9 644.9 532.6 650.4 548.4 C655.9 564.3 660.5 585.3 667.1 600.0 C673.7 614.7 679.3 623.8 689.8 636.4 C700.3 648.9 716.7 664.7 730.2 675.2 C743.7 685.7 758.1 693.1 770.9 699.5 C783.6 705.8 796.0 710.8 806.9 713.6 C817.7 716.3 827.7 716.8 836.0 715.8 C844.3 714.7 850.5 711.1 856.4 707.3 C862.2 703.4 868.1 704.0 871.2 692.6 C874.3 681.1 874.8 654.0 875.0 638.6 C875.2 623.2 873.3 613.0 872.4 600.0 C871.5 587.0 870.5 574.1 869.5 560.8 C868.5 547.5 867.2 533.5 866.4 520.0 C865.7 506.5 865.6 491.7 865.0 480.0 C864.4 468.3 863.8 458.3 863.0 450.0 C862.2 441.7 862.2 439.2 860.0 430.0 C857.8 420.8 853.0 406.7 850.0 395.0 C847.0 383.3 843.9 370.0 842.0 360.0 C840.1 350.0 840.0 340.7 838.8 335.0 C837.6 329.3 836.9 329.5 835.0 326.0 C833.1 322.5 830.0 317.7 827.5 314.0 C825.0 310.3 822.6 307.0 820.0 304.0 C817.4 301.0 814.8 298.4 812.0 296.0 C809.2 293.6 809.7 294.6 803.5 289.3 C797.3 284.0 779.8 268.2 775.0 264.0"/>
<path d="M629.0 207.0 C630.0 210.8 633.3 222.5 635.0 230.0 C636.7 237.5 637.8 245.0 639.0 252.0 C640.2 259.0 641.8 265.7 642.0 272.0 C642.2 278.3 641.4 285.3 640.0 290.0 C638.6 294.7 635.8 295.8 633.5 300.0 C631.2 304.2 629.5 310.2 626.0 315.0 C622.5 319.8 617.0 324.0 612.5 328.5 C608.0 333.0 603.2 336.8 599.0 342.0 C594.8 347.2 590.0 355.2 587.0 360.0 C584.0 364.8 582.3 366.8 581.0 371.0 C579.7 375.2 578.7 380.2 579.0 385.0 C579.3 389.8 580.7 395.0 583.0 400.0 C585.3 405.0 589.3 410.0 593.0 415.0 C596.7 420.0 600.5 424.2 605.0 430.0 C609.5 435.8 615.5 442.5 620.0 450.0 C624.5 457.5 628.7 465.8 632.0 475.0 C635.3 484.2 636.3 492.7 640.0 505.0 C643.7 517.3 649.1 532.7 654.2 548.6 C659.2 564.4 663.9 585.4 670.3 600.0 C676.7 614.6 682.2 623.8 692.4 636.2 C702.6 648.6 718.4 664.2 731.5 674.7 C744.7 685.2 758.7 692.7 771.2 699.1 C783.8 705.6 796.1 710.8 806.9 713.4 C817.7 716.1 827.8 716.3 836.0 715.0 C844.2 713.8 850.3 709.9 855.9 705.7 C861.6 701.6 866.9 701.6 869.9 690.3 C872.8 679.0 873.3 653.0 873.7 638.0 C874.1 622.9 872.9 612.9 872.2 600.0 C871.6 587.1 871.2 574.1 870.0 560.8 C868.8 547.4 866.5 533.5 865.2 520.0 C863.9 506.5 863.2 491.7 862.0 480.0 C860.8 468.3 860.0 461.7 858.0 450.0 C856.0 438.3 853.0 421.7 850.0 410.0 C847.0 398.3 843.3 390.0 840.0 380.0 C836.7 370.0 832.7 357.5 830.0 350.0 C827.3 342.5 825.5 338.5 823.8 335.0 C822.1 331.5 821.9 331.2 820.0 329.0 C818.1 326.8 816.2 324.5 812.5 321.5 C808.8 318.5 803.1 315.1 797.5 311.0 C791.9 306.9 782.1 299.3 779.0 297.0"/>
<path d="M629.0 207.0 C630.0 210.8 633.3 222.5 635.0 230.0 C636.7 237.5 637.8 245.0 639.0 252.0 C640.2 259.0 641.8 265.7 642.0 272.0 C642.2 278.3 641.4 285.3 640.0 290.0 C638.6 294.7 635.8 295.8 633.5 300.0 C631.2 304.2 629.5 310.2 626.0 315.0 C622.5 319.8 617.0 324.0 612.5 328.5 C608.0 333.0 603.2 336.8 599.0 342.0 C594.8 347.2 590.0 355.2 587.0 360.0 C584.0 364.8 582.3 366.8 581.0 371.0 C579.7 375.2 578.7 380.2 579.0 385.0 C579.3 389.8 580.7 395.0 583.0 400.0 C585.3 405.0 589.3 410.0 593.0 415.0 C596.7 420.0 600.5 424.2 605.0 430.0 C609.5 435.8 615.5 442.5 620.0 450.0 C624.5 457.5 628.7 465.8 632.0 475.0 C635.3 484.2 635.8 492.7 640.0 505.0 C644.2 517.3 650.6 532.9 656.9 548.7 C663.2 564.5 671.3 585.4 677.6 600.0 C683.9 614.6 686.2 623.4 694.6 636.1 C703.0 648.7 716.0 665.0 728.1 676.1 C740.2 687.2 754.1 696.0 767.1 702.7 C780.1 709.3 794.4 714.2 805.9 715.9 C817.3 717.6 827.9 715.3 836.0 712.9 C844.1 710.5 849.3 705.7 854.6 701.4 C859.9 697.0 864.7 697.4 867.8 686.8 C871.0 676.2 872.6 652.3 873.5 637.9 C874.3 623.4 873.7 612.8 873.0 600.0 C872.3 587.2 870.9 574.2 869.3 560.8 C867.8 547.5 865.1 533.5 863.7 520.0 C862.3 506.5 861.9 495.0 861.0 480.0 C860.1 465.0 859.3 445.0 858.0 430.0 C856.7 415.0 854.7 401.7 853.0 390.0 C851.3 378.3 849.5 367.5 848.0 360.0 C846.5 352.5 845.5 349.2 844.0 345.0 C842.5 340.8 840.3 337.9 838.8 335.0 C837.3 332.1 836.9 330.0 835.0 327.5 C833.1 325.0 829.8 322.2 827.5 320.0 C825.2 317.8 825.5 317.0 821.5 314.0 C817.5 311.0 806.5 304.0 803.5 302.0"/>
<path d="M599.8 337.5 C599.4 340.0 598.1 348.1 597.5 352.5 C596.9 356.9 595.5 360.0 596.0 363.8 C596.5 367.5 598.4 370.6 600.5 375.0 C602.6 379.4 606.0 385.8 608.8 390.0 C611.5 394.2 614.1 396.3 617.0 400.0 C619.9 403.7 623.2 407.7 626.0 412.0 C628.8 416.3 631.7 420.5 634.0 426.0 C636.3 431.5 638.5 436.8 640.0 445.0 C641.5 453.2 642.3 465.0 643.0 475.0 C643.7 485.0 641.6 492.7 644.0 505.0 C646.4 517.3 652.4 532.9 657.3 548.7 C662.2 564.5 667.2 585.4 673.4 600.0 C679.6 614.6 684.8 623.7 694.8 636.0 C704.7 648.4 720.1 663.7 733.0 674.0 C745.9 684.4 759.8 691.9 772.2 698.3 C784.5 704.8 796.7 709.9 807.3 712.5 C818.0 715.1 828.0 715.2 836.0 713.9 C844.0 712.5 850.1 708.6 855.5 704.4 C861.0 700.2 866.0 699.6 868.8 688.4 C871.5 677.2 871.8 651.9 872.1 637.2 C872.5 622.5 871.3 612.7 870.8 600.0 C870.2 587.3 869.8 574.2 868.8 560.9 C867.7 547.6 865.6 533.5 864.3 520.0 C863.0 506.5 862.0 495.0 861.0 480.0 C860.0 465.0 859.3 445.0 858.0 430.0 C856.7 415.0 854.7 401.7 853.0 390.0 C851.3 378.3 849.5 367.5 848.0 360.0 C846.5 352.5 845.5 349.2 844.0 345.0 C842.5 340.8 840.3 337.9 838.8 335.0 C837.3 332.1 836.9 330.0 835.0 327.5 C833.1 325.0 829.8 322.2 827.5 320.0 C825.2 317.8 825.5 317.0 821.5 314.0 C817.5 311.0 806.5 304.0 803.5 302.0"/>
<path d="M599.8 337.5 C599.4 340.0 598.1 348.1 597.5 352.5 C596.9 356.9 595.5 360.0 596.0 363.8 C596.5 367.5 598.4 370.6 600.5 375.0 C602.6 379.4 606.0 385.8 608.8 390.0 C611.5 394.2 614.1 396.3 617.0 400.0 C619.9 403.7 623.2 407.7 626.0 412.0 C628.8 416.3 631.7 420.5 634.0 426.0 C636.3 431.5 638.5 436.8 640.0 445.0 C641.5 453.2 642.3 465.0 643.0 475.0 C643.7 485.0 641.4 492.7 644.0 505.0 C646.6 517.3 653.5 532.9 658.6 548.8 C663.8 564.6 668.9 585.4 674.8 600.0 C680.7 614.6 684.7 623.7 694.2 636.1 C703.7 648.5 719.1 664.0 732.0 674.5 C744.9 684.9 759.0 692.5 771.6 698.8 C784.2 705.2 796.6 710.1 807.3 712.5 C818.0 715.0 828.0 714.9 836.0 713.5 C844.0 712.1 850.0 708.4 855.4 704.1 C860.8 699.8 865.8 699.1 868.4 687.9 C871.0 676.6 870.9 651.3 871.0 636.7 C871.0 622.0 869.5 612.6 868.7 600.0 C868.0 587.4 867.4 574.5 866.4 561.1 C865.5 547.8 864.1 533.5 863.0 520.0 C861.9 506.5 861.2 491.7 860.0 480.0 C858.8 468.3 857.7 461.7 856.0 450.0 C854.3 438.3 852.3 423.3 850.0 410.0 C847.7 396.7 844.3 380.0 842.0 370.0 C839.7 360.0 837.9 355.8 836.0 350.0 C834.1 344.2 831.9 338.8 830.5 335.0 C829.1 331.2 829.8 331.2 827.5 327.5 C825.2 323.8 821.0 316.8 817.0 312.5 C813.0 308.2 805.8 303.8 803.5 302.0"/>
<path d="M627.0 212.0 C628.0 215.8 631.3 227.8 633.0 235.0 C634.7 242.2 635.8 248.5 637.0 255.0 C638.2 261.5 639.7 267.8 640.0 274.0 C640.3 280.2 639.7 287.0 639.0 292.0 C638.3 297.0 637.7 300.3 636.0 304.0 C634.3 307.7 632.5 310.2 629.0 314.0 C625.5 317.8 619.3 322.7 615.0 327.0 C610.7 331.3 606.5 335.8 603.0 340.0 C599.5 344.2 596.5 347.8 594.0 352.0 C591.5 356.2 589.3 359.5 588.0 365.0 C586.7 370.5 584.8 379.2 586.0 385.0 C587.2 390.8 591.2 395.0 595.0 400.0 C598.8 405.0 604.8 410.0 609.0 415.0 C613.2 420.0 616.5 425.0 620.0 430.0 C623.5 435.0 627.2 439.2 630.0 445.0 C632.8 450.8 634.5 455.0 637.0 465.0 C639.5 475.0 641.3 491.0 645.0 505.0 C648.7 519.0 654.4 533.0 659.2 548.8 C664.0 564.6 668.1 585.4 673.6 600.0 C679.1 614.6 682.6 623.7 692.1 636.2 C701.6 648.7 717.3 664.6 730.5 675.1 C743.7 685.6 758.3 693.1 771.2 699.2 C784.1 705.2 797.0 709.6 807.8 711.4 C818.6 713.2 828.3 711.9 836.0 710.0 C843.7 708.0 849.1 704.1 854.1 699.7 C859.1 695.4 863.3 694.3 866.0 683.7 C868.6 673.1 869.3 650.1 870.0 636.2 C870.7 622.2 870.4 612.6 870.3 600.0 C870.1 587.4 870.1 574.2 869.1 560.9 C868.0 547.5 865.4 533.5 863.9 520.0 C862.4 506.5 861.3 491.7 860.0 480.0 C858.7 468.3 857.7 461.7 856.0 450.0 C854.3 438.3 852.3 423.3 850.0 410.0 C847.7 396.7 844.3 380.0 842.0 370.0 C839.7 360.0 837.9 355.8 836.0 350.0 C834.1 344.2 831.9 338.8 830.5 335.0 C829.1 331.2 829.8 331.2 827.5 327.5 C825.2 323.8 821.0 316.8 817.0 312.5 C813.0 308.2 805.8 303.8 803.5 302.0"/>
<path d="M605.0 350.0 C604.7 352.0 602.8 358.7 603.0 362.0 C603.2 365.3 604.2 366.7 606.0 370.0 C607.8 373.3 611.3 378.2 614.0 382.0 C616.7 385.8 619.0 388.3 622.0 393.0 C625.0 397.7 629.2 404.2 632.0 410.0 C634.8 415.8 637.2 421.8 639.0 428.0 C640.8 434.2 642.2 438.8 643.0 447.0 C643.8 455.2 643.7 467.3 644.0 477.0 C644.3 486.7 642.4 493.0 645.0 505.0 C647.6 517.0 654.1 533.0 659.9 548.8 C665.7 564.6 673.0 585.5 680.0 600.0 C686.9 614.5 692.0 623.5 701.6 635.6 C711.2 647.6 725.5 662.1 737.7 672.1 C749.9 682.2 763.3 689.6 775.0 695.9 C786.8 702.2 798.2 707.3 808.4 710.0 C818.5 712.7 828.2 713.0 836.0 711.9 C843.8 710.8 849.8 707.3 855.2 703.2 C860.5 699.1 865.5 698.5 868.2 687.4 C870.9 676.4 871.2 651.5 871.6 636.9 C871.9 622.4 870.9 612.7 870.4 600.0 C869.8 587.3 869.4 574.3 868.2 560.9 C867.0 547.6 864.6 533.5 863.0 520.0 C861.5 506.5 860.0 491.7 859.0 480.0 C858.0 468.3 858.3 461.0 857.0 450.0 C855.7 439.0 853.5 425.3 851.0 414.0 C848.5 402.7 845.2 392.3 842.0 382.0 C838.8 371.7 835.2 360.0 832.0 352.0 C828.8 344.0 825.7 338.2 823.0 334.0 C820.3 329.8 819.7 330.0 816.0 327.0 C812.3 324.0 806.2 319.8 801.0 316.0 C795.8 312.2 787.7 306.0 785.0 304.0"/>
<path d="M605.0 350.0 C604.7 352.0 602.8 358.7 603.0 362.0 C603.2 365.3 604.2 366.7 606.0 370.0 C607.8 373.3 611.3 378.2 614.0 382.0 C616.7 385.8 619.0 388.3 622.0 393.0 C625.0 397.7 629.2 404.2 632.0 410.0 C634.8 415.8 637.2 421.8 639.0 428.0 C640.8 434.2 642.2 438.8 643.0 447.0 C643.8 455.2 643.7 467.3 644.0 477.0 C644.3 486.7 642.1 493.0 645.0 505.0 C647.9 517.0 655.5 533.0 661.3 548.9 C667.1 564.7 673.8 585.5 679.6 600.0 C685.4 614.5 687.7 623.5 696.3 635.9 C704.9 648.4 718.9 664.1 731.2 674.8 C743.5 685.5 757.6 693.6 770.2 700.0 C782.9 706.4 796.1 711.2 807.1 713.0 C818.1 714.7 828.2 713.0 836.0 710.5 C843.8 708.1 849.0 703.3 853.7 698.2 C858.3 693.1 861.7 690.7 863.8 680.1 C866.0 669.5 866.1 648.0 866.8 634.6 C867.4 621.3 867.7 612.3 867.8 600.0 C867.9 587.7 868.5 574.3 867.6 561.0 C866.7 547.7 864.2 533.5 862.6 520.0 C861.0 506.5 859.1 491.7 858.0 480.0 C856.9 468.3 857.7 462.0 856.0 450.0 C854.3 438.0 851.0 420.3 848.0 408.0 C845.0 395.7 841.3 386.5 838.0 376.0 C834.7 365.5 830.8 352.5 828.0 345.0 C825.2 337.5 823.3 334.5 821.0 331.0 C818.7 327.5 817.7 327.0 814.0 324.0 C810.3 321.0 804.2 316.9 799.0 313.0 C793.8 309.1 785.2 302.6 782.5 300.5"/>
<path d="M607.0 346.5 C606.7 348.8 605.0 356.5 605.0 360.0 C605.0 363.5 605.2 364.4 607.0 367.5 C608.8 370.6 613.1 375.0 616.0 378.8 C618.9 382.5 621.3 384.8 624.5 390.0 C627.7 395.2 632.2 404.2 635.0 410.0 C637.8 415.8 639.5 419.2 641.0 425.0 C642.5 430.8 643.3 436.7 644.0 445.0 C644.7 453.3 644.7 465.0 645.0 475.0 C645.3 485.0 643.3 492.7 646.0 505.0 C648.7 517.3 655.3 533.0 661.1 548.9 C667.0 564.7 674.5 585.6 681.3 600.0 C688.2 614.4 692.7 623.5 702.1 635.5 C711.5 647.6 725.5 662.0 737.7 672.1 C749.8 682.2 763.0 689.8 774.8 696.1 C786.5 702.5 798.0 707.7 808.2 710.3 C818.4 712.9 828.2 713.2 836.0 711.9 C843.8 710.6 849.8 706.9 855.0 702.6 C860.2 698.2 864.8 696.9 867.2 685.8 C869.6 674.6 869.4 650.2 869.5 635.9 C869.6 621.6 868.4 612.5 867.8 600.0 C867.1 587.5 866.5 574.6 865.4 561.2 C864.4 547.9 862.6 533.5 861.3 520.0 C860.1 506.5 858.9 491.7 858.0 480.0 C857.1 468.3 857.7 462.0 856.0 450.0 C854.3 438.0 851.0 420.3 848.0 408.0 C845.0 395.7 841.3 386.5 838.0 376.0 C834.7 365.5 830.8 352.5 828.0 345.0 C825.2 337.5 823.3 334.5 821.0 331.0 C818.7 327.5 817.7 327.0 814.0 324.0 C810.3 321.0 804.2 316.9 799.0 313.0 C793.8 309.1 785.2 302.6 782.5 300.5"/>
<path d="M607.0 346.5 C606.7 348.8 605.0 356.5 605.0 360.0 C605.0 363.5 605.2 364.4 607.0 367.5 C608.8 370.6 613.1 375.0 616.0 378.8 C618.9 382.5 621.3 384.8 624.5 390.0 C627.7 395.2 632.2 404.2 635.0 410.0 C637.8 415.8 639.5 419.2 641.0 425.0 C642.5 430.8 643.3 436.7 644.0 445.0 C644.7 453.3 644.7 465.0 645.0 475.0 C645.3 485.0 643.6 492.7 646.0 505.0 C648.4 517.3 654.6 533.0 659.7 548.8 C664.8 564.6 670.2 585.5 676.6 600.0 C683.1 614.5 688.4 623.7 698.4 635.8 C708.5 647.9 723.9 662.6 736.9 672.5 C749.8 682.3 763.9 689.3 776.1 695.0 C788.2 700.8 799.7 704.9 809.7 706.9 C819.6 709.0 828.6 708.5 836.0 707.1 C843.4 705.8 848.9 702.8 853.9 698.9 C858.8 694.9 863.2 693.8 865.8 683.3 C868.3 672.8 868.7 649.6 869.2 635.8 C869.6 621.9 868.9 612.4 868.5 600.0 C868.0 587.6 867.5 574.5 866.3 561.1 C865.2 547.8 863.0 533.5 861.6 520.0 C860.2 506.5 859.1 491.7 858.0 480.0 C856.9 468.3 856.2 458.0 855.0 450.0 C853.8 442.0 853.2 439.5 851.0 432.0 C848.8 424.5 845.2 413.3 842.0 405.0 C838.8 396.7 835.7 388.8 832.0 382.0 C828.3 375.2 824.2 369.3 820.0 364.0 C815.8 358.7 811.5 353.7 807.0 350.0 C802.5 346.3 795.3 343.3 793.0 342.0"/>
<path d="M625.0 221.0 C626.0 224.2 629.3 233.8 631.0 240.0 C632.7 246.2 633.8 252.0 635.0 258.0 C636.2 264.0 637.3 270.0 638.0 276.0 C638.7 282.0 639.0 290.0 639.0 294.0 C639.0 298.0 639.3 297.2 638.0 300.0 C636.7 302.8 633.3 307.8 631.0 311.0 C628.7 314.2 627.1 315.8 624.0 319.0 C620.9 322.2 615.9 326.9 612.5 330.0 C609.1 333.1 606.2 334.3 603.5 337.5 C600.8 340.7 598.0 345.2 596.0 349.0 C594.0 352.8 592.3 355.7 591.5 360.0 C590.7 364.3 590.2 370.8 591.0 375.0 C591.8 379.2 593.7 380.8 596.0 385.0 C598.3 389.2 601.5 395.0 605.0 400.0 C608.5 405.0 613.2 410.0 617.0 415.0 C620.8 420.0 624.8 425.0 628.0 430.0 C631.2 435.0 633.8 439.2 636.0 445.0 C638.2 450.8 639.5 457.5 641.0 465.0 C642.5 472.5 644.0 483.3 645.0 490.0 C646.0 496.7 644.0 495.2 647.0 505.0 C650.0 514.8 657.0 533.1 662.8 548.9 C668.7 564.8 676.0 585.5 682.1 600.0 C688.2 614.5 690.7 623.5 699.5 635.7 C708.3 647.9 722.5 663.1 734.9 673.3 C747.4 683.4 761.9 690.8 774.3 696.6 C786.6 702.4 798.9 706.2 809.2 708.1 C819.5 709.9 828.5 709.0 836.0 707.5 C843.5 706.1 849.0 703.4 854.0 699.4 C859.0 695.4 863.7 694.4 866.0 683.7 C868.3 673.0 868.1 649.1 867.9 635.2 C867.8 621.2 866.0 612.3 865.1 600.0 C864.2 587.7 863.3 574.9 862.5 561.5 C861.7 548.2 861.3 533.6 860.5 520.0 C859.8 506.4 858.9 491.7 858.0 480.0 C857.1 468.3 856.2 458.0 855.0 450.0 C853.8 442.0 853.2 439.5 851.0 432.0 C848.8 424.5 845.2 413.3 842.0 405.0 C838.8 396.7 835.7 388.8 832.0 382.0 C828.3 375.2 824.2 369.3 820.0 364.0 C815.8 358.7 811.5 353.7 807.0 350.0 C802.5 346.3 795.3 343.3 793.0 342.0"/>
<path d="M625.0 221.0 C626.0 224.2 629.3 233.8 631.0 240.0 C632.7 246.2 633.8 252.0 635.0 258.0 C636.2 264.0 637.3 270.0 638.0 276.0 C638.7 282.0 639.0 290.0 639.0 294.0 C639.0 298.0 639.3 297.2 638.0 300.0 C636.7 302.8 633.3 307.8 631.0 311.0 C628.7 314.2 627.1 315.8 624.0 319.0 C620.9 322.2 615.9 326.9 612.5 330.0 C609.1 333.1 606.2 334.3 603.5 337.5 C600.8 340.7 598.0 345.2 596.0 349.0 C594.0 352.8 592.3 355.7 591.5 360.0 C590.7 364.3 590.2 370.8 591.0 375.0 C591.8 379.2 593.7 380.8 596.0 385.0 C598.3 389.2 601.5 395.0 605.0 400.0 C608.5 405.0 613.2 410.0 617.0 415.0 C620.8 420.0 624.8 425.0 628.0 430.0 C631.2 435.0 633.8 439.2 636.0 445.0 C638.2 450.8 639.5 457.5 641.0 465.0 C642.5 472.5 644.0 483.3 645.0 490.0 C646.0 496.7 644.2 495.2 647.0 505.0 C649.8 514.8 656.1 533.1 661.8 548.9 C667.6 564.7 674.7 585.6 681.5 600.0 C688.3 614.4 693.1 623.5 702.6 635.5 C712.1 647.4 726.5 661.8 738.8 671.7 C751.0 681.6 764.6 688.8 776.3 694.8 C788.1 700.8 799.4 705.5 809.3 707.7 C819.3 710.0 828.6 709.8 836.0 708.3 C843.4 706.9 849.1 703.6 854.0 699.2 C858.8 694.8 862.9 692.9 865.1 682.1 C867.2 671.4 866.9 648.4 867.0 634.7 C867.1 621.0 866.1 612.2 865.6 600.0 C865.0 587.8 864.5 574.8 863.5 561.4 C862.6 548.1 861.2 533.6 860.1 520.0 C859.0 506.4 858.0 491.7 857.0 480.0 C856.0 468.3 855.2 458.3 854.0 450.0 C852.8 441.7 852.3 438.3 850.0 430.0 C847.7 421.7 843.3 408.7 840.0 400.0 C836.7 391.3 833.3 384.7 830.0 378.0 C826.7 371.3 823.7 365.5 820.0 360.0 C816.3 354.5 812.8 348.9 808.0 345.0 C803.2 341.1 794.2 337.9 791.5 336.5"/>
<path d="M611.0 352.5 C610.8 354.1 609.7 358.8 610.0 362.0 C610.3 365.2 611.2 368.3 613.0 372.0 C614.8 375.7 618.3 380.0 621.0 384.0 C623.7 388.0 626.3 391.3 629.0 396.0 C631.7 400.7 634.8 406.3 637.0 412.0 C639.2 417.7 640.7 423.7 642.0 430.0 C643.3 436.3 644.2 441.7 645.0 450.0 C645.8 458.3 646.5 470.8 647.0 480.0 C647.5 489.2 645.2 493.5 648.0 505.0 C650.8 516.5 657.7 533.1 663.7 549.0 C669.6 564.8 677.3 585.6 683.7 600.0 C690.2 614.4 693.4 623.5 702.3 635.5 C711.2 647.6 725.0 662.3 737.2 672.3 C749.3 682.4 763.1 689.9 775.1 695.8 C787.2 701.7 799.1 706.0 809.3 707.9 C819.4 709.7 828.7 708.6 836.0 706.8 C843.3 705.0 848.7 701.6 853.3 697.2 C858.0 692.7 861.8 690.7 863.9 680.2 C866.0 669.7 865.9 647.7 866.1 634.3 C866.3 620.9 865.5 612.1 864.9 600.0 C864.2 587.9 863.5 574.9 862.3 561.5 C861.2 548.2 859.4 533.6 858.0 520.0 C856.6 506.4 855.0 490.0 854.0 480.0 C853.0 470.0 852.8 466.7 852.0 460.0 C851.2 453.3 850.8 448.3 849.0 440.0 C847.2 431.7 844.0 419.2 841.0 410.0 C838.0 400.8 834.5 392.3 831.0 385.0 C827.5 377.7 824.3 371.2 820.0 366.0 C815.7 360.8 809.9 357.0 805.0 354.0 C800.1 351.0 792.9 349.0 790.5 348.0"/>
<path d="M620.0 349.0 C621.0 350.3 623.3 354.0 626.0 357.0 C628.7 360.0 632.8 363.0 636.0 367.0 C639.2 371.0 642.5 376.0 645.0 381.0 C647.5 386.0 649.5 390.8 651.0 397.0 C652.5 403.2 653.3 410.0 654.0 418.0 C654.7 426.0 654.7 435.3 655.0 445.0 C655.3 454.7 656.3 466.0 656.0 476.0 C655.7 486.0 651.1 492.8 653.0 505.0 C654.9 517.2 662.0 533.3 667.5 549.1 C673.1 565.0 680.4 585.6 686.3 600.0 C692.2 614.4 694.7 623.4 703.1 635.5 C711.5 647.5 725.0 662.3 736.8 672.5 C748.7 682.7 762.2 690.5 774.2 696.6 C786.2 702.7 798.4 707.4 808.7 709.1 C819.0 710.8 828.7 709.3 836.0 707.0 C843.3 704.7 848.5 700.5 852.8 695.3 C857.1 690.2 859.8 686.6 861.5 676.1 C863.2 665.7 862.6 645.4 862.9 632.7 C863.2 620.1 863.3 611.9 863.3 600.0 C863.3 588.1 863.7 574.8 862.9 561.5 C862.2 548.1 860.3 533.6 858.8 520.0 C857.3 506.4 855.1 490.0 854.0 480.0 C852.9 470.0 852.8 466.7 852.0 460.0 C851.2 453.3 850.8 448.3 849.0 440.0 C847.2 431.7 844.0 419.2 841.0 410.0 C838.0 400.8 834.5 392.3 831.0 385.0 C827.5 377.7 824.3 371.2 820.0 366.0 C815.7 360.8 809.9 357.0 805.0 354.0 C800.1 351.0 792.9 349.0 790.5 348.0"/>
<path d="M620.0 349.0 C621.0 350.3 623.3 354.0 626.0 357.0 C628.7 360.0 632.8 363.0 636.0 367.0 C639.2 371.0 642.5 376.0 645.0 381.0 C647.5 386.0 649.5 390.8 651.0 397.0 C652.5 403.2 653.3 410.0 654.0 418.0 C654.7 426.0 654.7 435.3 655.0 445.0 C655.3 454.7 656.3 466.0 656.0 476.0 C655.7 486.0 651.0 492.8 653.0 505.0 C655.0 517.2 662.2 533.3 668.1 549.1 C674.0 565.0 682.1 585.6 688.5 600.0 C694.8 614.4 697.7 623.3 706.1 635.2 C714.5 647.2 727.6 661.4 739.1 671.5 C750.6 681.6 763.6 689.4 775.2 695.8 C786.7 702.2 798.3 707.4 808.4 709.8 C818.6 712.2 828.4 711.9 836.0 710.1 C843.6 708.3 849.3 704.2 853.9 699.1 C858.5 693.9 861.9 690.4 863.5 679.4 C865.0 668.4 863.6 646.1 863.2 632.9 C862.8 619.7 861.8 611.8 861.0 600.0 C860.1 588.2 859.4 575.3 858.1 562.0 C856.9 548.6 855.1 533.7 853.4 520.0 C851.8 506.3 849.7 491.7 848.0 480.0 C846.3 468.3 844.7 458.3 843.0 450.0 C841.3 441.7 840.2 437.5 838.0 430.0 C835.8 422.5 833.0 412.8 830.0 405.0 C827.0 397.2 823.3 388.8 820.0 383.0 C816.7 377.2 815.0 375.2 810.0 370.0 C805.0 364.8 798.0 358.7 790.0 352.0 C782.0 345.3 771.2 337.7 762.0 330.0 C752.8 322.3 739.5 310.0 735.0 306.0"/>
<path d="M617.0 345.0 C617.5 346.2 618.2 349.4 620.0 352.5 C621.8 355.6 624.4 360.0 627.5 363.8 C630.6 367.5 635.9 371.5 638.8 375.0 C641.7 378.5 643.1 380.8 645.0 385.0 C646.9 389.2 648.7 394.2 650.0 400.0 C651.3 405.8 652.3 412.5 653.0 420.0 C653.7 427.5 653.7 435.8 654.0 445.0 C654.3 454.2 655.0 465.0 655.0 475.0 C655.0 485.0 652.0 492.6 654.0 505.0 C656.0 517.4 661.8 533.3 667.0 549.1 C672.3 564.9 679.0 585.6 685.4 600.0 C691.8 614.4 696.2 623.5 705.6 635.3 C714.9 647.1 729.2 661.0 741.4 670.6 C753.5 680.2 767.0 687.2 778.6 692.9 C790.1 698.6 800.9 702.9 810.5 705.0 C820.1 707.0 828.9 706.6 836.0 705.2 C843.1 703.8 848.6 700.9 853.2 696.6 C857.7 692.2 861.4 689.6 863.3 679.1 C865.2 668.6 864.6 646.7 864.5 633.5 C864.4 620.3 863.6 611.9 862.8 600.0 C862.0 588.1 861.1 575.2 859.6 561.8 C858.1 548.5 855.7 533.6 853.8 520.0 C851.9 506.4 849.8 491.7 848.0 480.0 C846.2 468.3 844.7 458.3 843.0 450.0 C841.3 441.7 840.2 437.5 838.0 430.0 C835.8 422.5 833.0 412.8 830.0 405.0 C827.0 397.2 823.3 388.8 820.0 383.0 C816.7 377.2 815.0 375.2 810.0 370.0 C805.0 364.8 798.0 358.7 790.0 352.0 C782.0 345.3 771.2 337.7 762.0 330.0 C752.8 322.3 739.5 310.0 735.0 306.0"/>
<path d="M617.0 345.0 C617.5 346.2 618.2 349.4 620.0 352.5 C621.8 355.6 624.4 360.0 627.5 363.8 C630.6 367.5 635.9 371.5 638.8 375.0 C641.7 378.5 643.1 380.8 645.0 385.0 C646.9 389.2 648.7 394.2 650.0 400.0 C651.3 405.8 652.3 412.5 653.0 420.0 C653.7 427.5 653.7 435.8 654.0 445.0 C654.3 454.2 655.0 465.0 655.0 475.0 C655.0 485.0 651.8 492.6 654.0 505.0 C656.2 517.4 663.0 533.3 668.4 549.2 C673.8 565.0 680.5 585.6 686.5 600.0 C692.5 614.4 695.3 623.5 704.2 635.4 C713.2 647.2 727.8 661.5 740.3 671.1 C752.7 680.6 767.0 687.2 778.8 692.7 C790.6 698.1 801.5 701.7 811.1 703.6 C820.6 705.5 829.0 705.2 836.0 704.1 C843.0 702.9 848.6 700.7 853.1 696.5 C857.7 692.3 861.5 689.5 863.1 678.9 C864.8 668.3 863.5 646.0 863.1 632.8 C862.7 619.7 861.4 611.8 860.6 600.0 C859.7 588.2 859.2 575.3 858.0 562.0 C856.8 548.6 855.1 533.7 853.3 520.0 C851.5 506.3 848.9 491.7 847.0 480.0 C845.1 468.3 843.8 458.0 842.0 450.0 C840.2 442.0 838.3 439.0 836.0 432.0 C833.7 425.0 831.0 415.7 828.0 408.0 C825.0 400.3 821.7 392.0 818.0 386.0 C814.3 380.0 811.3 377.3 806.0 372.0 C800.7 366.7 794.0 360.7 786.0 354.0 C778.0 347.3 766.9 339.3 758.0 332.0 C749.1 324.7 736.8 313.7 732.5 310.0"/>
<path d="M619.3 346.5 C619.8 347.8 620.2 350.9 622.0 354.0 C623.8 357.1 626.8 361.3 630.0 365.0 C633.2 368.7 638.2 372.3 641.0 376.0 C643.8 379.7 645.2 382.7 647.0 387.0 C648.8 391.3 650.7 396.2 652.0 402.0 C653.3 407.8 654.3 414.5 655.0 422.0 C655.7 429.5 655.7 437.8 656.0 447.0 C656.3 456.2 657.0 467.3 657.0 477.0 C657.0 486.7 654.0 493.0 656.0 505.0 C658.0 517.0 663.5 533.4 669.2 549.2 C674.9 565.0 683.5 585.7 690.3 600.0 C697.0 614.3 701.1 623.3 709.8 635.0 C718.5 646.7 731.0 660.4 742.3 670.2 C753.6 680.0 766.2 687.8 777.5 693.8 C788.7 699.9 800.1 704.7 809.8 706.5 C819.6 708.3 829.0 706.7 836.0 704.5 C843.0 702.2 848.1 698.1 852.1 693.0 C856.1 687.9 858.6 684.0 860.2 673.9 C861.8 663.8 861.4 644.5 861.8 632.2 C862.1 619.9 862.6 611.7 862.3 600.0 C862.0 588.3 861.5 575.1 860.0 561.8 C858.5 548.4 855.4 533.6 853.3 520.0 C851.1 506.4 848.9 491.7 847.0 480.0 C845.1 468.3 843.8 458.0 842.0 450.0 C840.2 442.0 838.3 439.0 836.0 432.0 C833.7 425.0 831.0 415.7 828.0 408.0 C825.0 400.3 821.7 392.0 818.0 386.0 C814.3 380.0 811.3 377.3 806.0 372.0 C800.7 366.7 794.0 360.7 786.0 354.0 C778.0 347.3 766.9 339.3 758.0 332.0 C749.1 324.7 736.8 313.7 732.5 310.0"/>
<path d="M619.3 346.5 C619.8 347.8 620.2 350.9 622.0 354.0 C623.8 357.1 626.8 361.3 630.0 365.0 C633.2 368.7 638.2 372.3 641.0 376.0 C643.8 379.7 645.2 382.7 647.0 387.0 C648.8 391.3 650.7 396.2 652.0 402.0 C653.3 407.8 654.3 414.5 655.0 422.0 C655.7 429.5 655.7 437.8 656.0 447.0 C656.3 456.2 657.0 467.3 657.0 477.0 C657.0 486.7 653.8 493.0 656.0 505.0 C658.2 517.0 664.9 533.4 670.3 549.2 C675.8 565.1 682.9 585.7 688.8 600.0 C694.7 614.3 697.0 623.5 705.7 635.3 C714.4 647.1 728.6 661.3 740.9 670.8 C753.2 680.3 767.6 686.9 779.4 692.1 C791.3 697.3 802.3 700.5 811.8 702.0 C821.2 703.5 829.2 702.5 836.0 701.1 C842.8 699.8 848.0 697.9 852.4 693.9 C856.8 690.0 860.5 687.7 862.3 677.5 C864.1 667.3 863.5 645.8 863.2 632.9 C862.9 620.0 861.6 611.8 860.5 600.0 C859.5 588.2 858.2 575.4 856.7 562.1 C855.3 548.8 853.6 533.7 851.8 520.0 C850.0 506.3 847.8 491.7 846.0 480.0 C844.2 468.3 842.8 459.2 841.0 450.0 C839.2 440.8 837.7 433.3 835.0 425.0 C832.3 416.7 828.3 407.5 825.0 400.0 C821.7 392.5 818.7 386.0 815.0 380.0 C811.3 374.0 808.8 369.0 803.0 364.0 C797.2 359.0 788.7 355.7 780.0 350.0 C771.3 344.3 758.0 335.0 751.0 330.0 C744.0 325.0 740.2 321.7 738.0 320.0"/>
<path d="M624.5 352.5 C625.9 353.8 630.1 357.1 633.0 360.0 C635.9 362.9 639.2 365.7 642.0 370.0 C644.8 374.3 647.8 380.2 650.0 386.0 C652.2 391.8 653.8 398.5 655.0 405.0 C656.2 411.5 656.5 417.5 657.0 425.0 C657.5 432.5 657.8 440.8 658.0 450.0 C658.2 459.2 658.0 470.8 658.0 480.0 C658.0 489.2 655.9 493.5 658.0 505.0 C660.1 516.5 665.2 533.4 670.6 549.3 C676.1 565.1 683.8 585.7 690.5 600.0 C697.2 614.3 701.7 623.4 710.7 634.9 C719.7 646.5 732.9 659.8 744.4 669.4 C755.9 678.9 768.5 686.2 779.5 692.1 C790.6 697.9 801.3 702.7 810.7 704.6 C820.1 706.5 829.1 705.4 836.0 703.4 C842.9 701.4 848.0 697.6 852.0 692.5 C855.9 687.4 858.2 683.0 859.6 672.9 C861.0 662.7 860.2 643.7 860.4 631.5 C860.5 619.4 860.9 611.6 860.6 600.0 C860.3 588.4 859.8 575.3 858.3 561.9 C856.9 548.6 853.9 533.7 851.7 520.0 C849.5 506.3 846.9 491.7 845.0 480.0 C843.1 468.3 841.7 458.3 840.0 450.0 C838.3 441.7 837.5 436.7 835.0 430.0 C832.5 423.3 828.3 415.8 825.0 410.0 C821.7 404.2 818.3 399.2 815.0 395.0 C811.7 390.8 809.2 388.3 805.0 385.0 C800.8 381.7 795.0 378.7 790.0 375.0 C785.0 371.3 784.0 370.5 775.0 363.0 C766.0 355.5 746.4 339.5 736.0 330.0 C725.6 320.5 716.4 310.0 712.5 306.0"/>
<path d="M657.0 153.0 C658.7 157.5 664.2 171.3 667.0 180.0 C669.8 188.7 672.5 197.5 674.0 205.0 C675.5 212.5 676.2 217.5 676.0 225.0 C675.8 232.5 674.5 241.2 673.0 250.0 C671.5 258.8 669.1 269.0 667.0 278.0 C664.9 287.0 660.9 295.8 660.1 304.0 C659.3 312.2 661.2 319.5 662.0 327.0 C662.8 334.5 663.7 342.8 664.8 349.0 C665.8 355.2 667.3 357.8 668.2 364.0 C669.0 370.2 670.2 377.3 670.0 386.0 C669.8 394.7 668.3 406.0 667.0 416.0 C665.7 426.0 662.8 436.0 662.0 446.0 C661.2 456.0 661.5 466.2 662.0 476.0 C662.5 485.8 662.6 492.8 665.0 505.0 C667.4 517.2 671.6 533.6 676.1 549.5 C680.7 565.3 686.9 585.7 692.3 600.0 C697.6 614.3 699.7 623.4 708.1 635.1 C716.5 646.8 730.4 660.8 742.5 670.2 C754.5 679.6 768.6 686.3 780.2 691.5 C791.8 696.7 802.7 700.0 812.1 701.3 C821.4 702.6 829.4 701.2 836.0 699.6 C842.6 698.0 847.6 695.8 851.7 691.7 C855.8 687.5 859.0 684.7 860.7 674.8 C862.4 664.9 862.0 644.7 861.9 632.3 C861.8 619.8 861.1 611.7 860.2 600.0 C859.3 588.3 858.0 575.5 856.5 562.1 C854.9 548.8 852.8 533.7 850.9 520.0 C849.0 506.3 846.8 491.7 845.0 480.0 C843.2 468.3 841.7 458.3 840.0 450.0 C838.3 441.7 837.5 436.7 835.0 430.0 C832.5 423.3 828.3 415.8 825.0 410.0 C821.7 404.2 818.3 399.2 815.0 395.0 C811.7 390.8 809.2 388.3 805.0 385.0 C800.8 381.7 795.0 378.7 790.0 375.0 C785.0 371.3 784.0 370.5 775.0 363.0 C766.0 355.5 746.4 339.5 736.0 330.0 C725.6 320.5 716.4 310.0 712.5 306.0"/>
<path d="M657.0 153.0 C658.7 157.5 664.2 171.3 667.0 180.0 C669.8 188.7 672.5 197.5 674.0 205.0 C675.5 212.5 676.2 217.5 676.0 225.0 C675.8 232.5 674.5 241.2 673.0 250.0 C671.5 258.8 669.1 269.0 667.0 278.0 C664.9 287.0 660.9 295.8 660.1 304.0 C659.3 312.2 661.2 319.5 662.0 327.0 C662.8 334.5 663.7 342.8 664.8 349.0 C665.8 355.2 667.3 357.8 668.2 364.0 C669.0 370.2 670.2 377.3 670.0 386.0 C669.8 394.7 668.3 406.0 667.0 416.0 C665.7 426.0 662.8 436.0 662.0 446.0 C661.2 456.0 661.5 466.2 662.0 476.0 C662.5 485.8 662.6 492.8 665.0 505.0 C667.4 517.2 671.5 533.6 676.3 549.5 C681.1 565.3 688.0 585.8 693.6 600.0 C699.2 614.2 701.8 623.3 710.1 635.0 C718.3 646.6 731.7 660.3 743.2 669.8 C754.8 679.4 768.1 686.6 779.4 692.2 C790.7 697.9 801.6 702.0 811.0 703.7 C820.5 705.4 829.2 704.2 836.0 702.2 C842.8 700.3 847.9 697.0 851.8 692.0 C855.7 687.0 858.1 682.4 859.2 672.2 C860.3 662.0 858.9 642.7 858.6 630.7 C858.3 618.6 858.0 611.4 857.4 600.0 C856.8 588.6 856.2 575.6 855.1 562.3 C854.0 548.9 852.4 533.7 850.7 520.0 C849.0 506.3 846.8 491.7 845.0 480.0 C843.2 468.3 842.5 460.8 840.0 450.0 C837.5 439.2 833.3 423.3 830.0 415.0 C826.7 406.7 824.2 404.2 820.0 400.0 C815.8 395.8 811.7 393.5 805.0 390.0 C798.3 386.5 784.2 380.8 780.0 379.0"/>
<path d="M660.0 143.0 C661.5 147.5 666.3 160.5 669.0 170.0 C671.7 179.5 674.5 192.0 676.0 200.0 C677.5 208.0 678.2 210.5 678.0 218.0 C677.8 225.5 676.5 235.5 675.0 245.0 C673.5 254.5 671.4 265.5 669.0 275.0 C666.6 284.5 662.1 293.7 660.6 302.0 C659.1 310.3 659.2 317.5 660.0 325.0 C660.7 332.5 663.4 340.8 665.1 347.0 C666.8 353.2 669.0 355.7 670.1 362.0 C671.3 368.3 672.2 376.2 672.0 385.0 C671.8 393.8 670.3 405.0 669.0 415.0 C667.7 425.0 664.8 435.0 664.0 445.0 C663.2 455.0 663.5 465.0 664.0 475.0 C664.5 485.0 664.6 492.6 667.0 505.0 C669.4 517.4 673.3 533.7 678.4 549.6 C683.6 565.4 691.8 585.8 697.8 600.0 C703.8 614.2 706.3 623.2 714.3 634.7 C722.3 646.1 734.8 659.3 745.8 668.8 C756.8 678.2 769.5 685.5 780.4 691.3 C791.3 697.2 801.8 701.7 811.0 703.7 C820.3 705.6 829.2 704.9 836.0 703.1 C842.8 701.3 848.2 698.0 852.1 692.9 C856.0 687.8 858.4 683.0 859.4 672.6 C860.5 662.2 858.7 642.6 858.2 630.5 C857.7 618.4 857.1 611.3 856.4 600.0 C855.7 588.7 855.0 575.7 854.0 562.4 C853.0 549.1 851.8 533.7 850.3 520.0 C848.8 506.3 846.7 491.7 845.0 480.0 C843.3 468.3 842.5 460.8 840.0 450.0 C837.5 439.2 833.3 423.3 830.0 415.0 C826.7 406.7 824.2 404.2 820.0 400.0 C815.8 395.8 811.7 393.5 805.0 390.0 C798.3 386.5 784.2 380.8 780.0 379.0"/>
<path d="M660.0 143.0 C661.5 147.5 666.3 160.5 669.0 170.0 C671.7 179.5 674.5 192.0 676.0 200.0 C677.5 208.0 678.2 210.5 678.0 218.0 C677.8 225.5 676.5 235.5 675.0 245.0 C673.5 254.5 671.4 265.5 669.0 275.0 C666.6 284.5 662.1 293.7 660.6 302.0 C659.1 310.3 659.2 317.5 660.0 325.0 C660.7 332.5 663.4 340.8 665.1 347.0 C666.8 353.2 669.0 355.7 670.1 362.0 C671.3 368.3 672.2 376.2 672.0 385.0 C671.8 393.8 670.3 405.0 669.0 415.0 C667.7 425.0 664.8 435.0 664.0 445.0 C663.2 455.0 663.5 465.0 664.0 475.0 C664.5 485.0 664.9 492.6 667.0 505.0 C669.1 517.4 672.4 533.7 676.8 549.5 C681.1 565.3 687.4 585.8 693.3 600.0 C699.2 614.2 703.2 623.5 712.2 634.8 C721.2 646.2 735.3 659.2 747.2 668.2 C759.1 677.2 772.6 683.5 783.6 688.6 C794.6 693.7 804.4 697.1 813.2 698.7 C821.9 700.3 829.6 699.5 836.0 698.2 C842.4 696.9 847.5 695.0 851.5 690.9 C855.5 686.8 858.4 683.3 859.9 673.4 C861.4 663.5 860.5 643.7 860.3 631.5 C860.1 619.3 859.4 611.5 858.5 600.0 C857.7 588.5 856.4 575.6 854.9 562.3 C853.5 549.0 851.5 533.7 849.7 520.0 C847.8 506.3 845.6 491.7 844.0 480.0 C842.4 468.3 842.3 458.3 840.0 450.0 C837.7 441.7 833.3 435.3 830.0 430.0 C826.7 424.7 825.7 422.2 820.0 418.0 C814.3 413.8 800.0 407.2 796.0 405.0"/>
<path d="M649.0 188.0 C651.3 192.0 659.5 205.0 663.0 212.0 C666.5 219.0 668.5 224.5 670.0 230.0 C671.5 235.5 672.2 237.5 672.0 245.0 C671.8 252.5 670.1 265.8 669.0 275.0 C667.9 284.2 664.2 291.3 665.2 300.0 C666.2 308.7 673.9 318.7 675.0 327.0 C676.0 335.3 672.2 343.7 671.4 350.0 C670.6 356.3 670.0 358.8 670.2 365.0 C670.5 371.2 673.0 378.3 673.0 387.0 C673.0 395.7 671.3 407.2 670.0 417.0 C668.7 426.8 665.8 436.2 665.0 446.0 C664.2 455.8 664.5 466.2 665.0 476.0 C665.5 485.8 665.6 492.7 668.0 505.0 C670.4 517.3 673.9 533.8 679.1 549.6 C684.3 565.4 693.1 585.8 699.3 600.0 C705.5 614.2 708.3 623.2 716.2 634.5 C724.2 645.9 736.2 658.9 747.0 668.3 C757.9 677.6 770.4 685.0 781.2 690.7 C791.9 696.3 802.5 700.7 811.6 702.3 C820.8 703.9 829.5 702.4 836.0 700.1 C842.5 697.9 847.5 694.4 850.9 689.0 C854.3 683.6 855.9 677.9 856.7 667.9 C857.5 658.0 855.9 640.7 855.8 629.3 C855.8 618.0 856.3 611.2 856.2 600.0 C856.1 588.8 856.3 575.6 855.2 562.3 C854.2 548.9 852.1 533.7 850.0 520.0 C848.0 506.3 845.0 490.8 843.0 480.0 C841.0 469.2 840.2 462.5 838.0 455.0 C835.8 447.5 833.0 440.5 830.0 435.0 C827.0 429.5 826.8 426.5 820.0 422.0 C813.2 417.5 794.2 410.3 789.0 408.0"/>
<path d="M649.0 188.0 C651.3 192.0 659.5 205.0 663.0 212.0 C666.5 219.0 668.5 224.5 670.0 230.0 C671.5 235.5 672.2 237.5 672.0 245.0 C671.8 252.5 670.1 265.8 669.0 275.0 C667.9 284.2 664.2 291.3 665.2 300.0 C666.2 308.7 673.9 318.7 675.0 327.0 C676.0 335.3 672.2 343.7 671.4 350.0 C670.6 356.3 670.0 358.8 670.2 365.0 C670.5 371.2 673.0 378.3 673.0 387.0 C673.0 395.7 671.3 407.2 670.0 417.0 C668.7 426.8 665.8 436.2 665.0 446.0 C664.2 455.8 664.5 466.2 665.0 476.0 C665.5 485.8 665.7 492.7 668.0 505.0 C670.3 517.3 673.7 533.7 678.6 549.6 C683.6 565.4 691.5 585.8 697.7 600.0 C704.0 614.2 707.5 623.3 716.1 634.6 C724.7 645.8 737.8 658.5 749.1 667.4 C760.5 676.3 773.6 682.9 784.3 688.0 C795.0 693.1 804.7 696.7 813.4 698.2 C822.0 699.8 829.7 698.8 836.0 697.3 C842.3 695.8 847.2 693.7 851.0 689.3 C854.7 684.9 857.2 680.8 858.5 671.0 C859.8 661.2 858.8 642.5 858.7 630.7 C858.5 618.9 858.3 611.4 857.7 600.0 C857.0 588.6 856.1 575.7 854.7 562.3 C853.3 549.0 851.1 533.7 849.2 520.0 C847.2 506.3 844.9 490.8 843.0 480.0 C841.1 469.2 840.2 462.5 838.0 455.0 C835.8 447.5 833.0 440.5 830.0 435.0 C827.0 429.5 826.8 426.5 820.0 422.0 C813.2 417.5 794.2 410.3 789.0 408.0"/>
<path d="M663.0 154.0 C664.3 158.3 668.7 171.5 671.0 180.0 C673.3 188.5 675.7 197.7 677.0 205.0 C678.3 212.3 679.2 216.5 679.0 224.0 C678.8 231.5 677.5 240.7 676.0 250.0 C674.5 259.3 671.7 271.0 670.0 280.0 C668.3 289.0 665.7 296.0 665.9 304.0 C666.0 312.0 670.2 320.3 671.0 328.0 C671.8 335.7 670.7 343.7 670.7 350.0 C670.7 356.3 670.5 359.7 671.1 366.0 C671.6 372.3 674.0 379.5 674.0 388.0 C674.0 396.5 672.3 407.3 671.0 417.0 C669.7 426.7 666.8 436.2 666.0 446.0 C665.2 455.8 665.5 466.2 666.0 476.0 C666.5 485.8 666.7 492.7 669.0 505.0 C671.3 517.3 674.5 533.8 679.8 549.6 C685.1 565.5 694.1 585.9 700.8 600.0 C707.5 614.1 711.3 623.2 719.8 634.3 C728.3 645.4 740.7 657.6 751.7 666.4 C762.6 675.2 775.1 681.8 785.4 687.1 C795.6 692.4 804.8 696.5 813.3 698.4 C821.7 700.4 829.6 700.1 836.0 698.9 C842.4 697.8 847.7 695.7 851.6 691.3 C855.5 686.9 858.3 682.7 859.4 672.6 C860.6 662.5 859.2 642.8 858.6 630.7 C858.1 618.6 857.3 611.4 856.2 600.0 C855.2 588.6 853.7 575.9 852.3 562.6 C850.8 549.2 849.2 533.8 847.5 520.0 C845.8 506.2 844.1 492.5 842.0 480.0 C839.9 467.5 837.8 455.0 835.0 445.0 C832.2 435.0 828.3 427.5 825.0 420.0 C821.7 412.5 821.7 405.8 815.0 400.0 C808.3 394.2 790.0 387.9 785.0 385.5"/>
<path d="M672.7 302.0 C673.7 305.8 677.9 317.8 678.9 325.0 C679.9 332.2 679.1 338.8 678.7 345.0 C678.2 351.2 677.0 355.3 676.4 362.0 C675.8 368.7 675.9 376.2 675.0 385.0 C674.1 393.8 672.3 405.0 671.0 415.0 C669.7 425.0 667.7 435.0 667.0 445.0 C666.3 455.0 666.5 465.0 667.0 475.0 C667.5 485.0 667.6 492.5 670.0 505.0 C672.4 517.5 676.9 533.9 681.7 549.7 C686.4 565.5 693.3 585.8 698.4 600.0 C703.6 614.2 704.4 623.4 712.4 634.8 C720.5 646.2 734.6 659.6 746.7 668.4 C758.8 677.2 773.7 683.0 785.1 687.4 C796.4 691.7 806.4 693.6 814.9 694.7 C823.4 695.7 830.0 694.6 836.0 693.5 C842.0 692.5 846.9 692.2 850.8 688.5 C854.6 684.9 857.7 681.3 858.9 671.6 C860.0 661.9 858.4 642.1 857.6 630.2 C856.8 618.2 855.2 611.2 854.1 600.0 C853.0 588.8 851.8 576.1 850.8 562.7 C849.7 549.4 849.2 533.8 847.8 520.0 C846.3 506.2 844.1 492.5 842.0 480.0 C839.9 467.5 837.8 455.0 835.0 445.0 C832.2 435.0 828.3 427.5 825.0 420.0 C821.7 412.5 821.7 405.8 815.0 400.0 C808.3 394.2 790.0 387.9 785.0 385.5"/>
<path d="M672.7 302.0 C673.7 305.8 677.9 317.8 678.9 325.0 C679.9 332.2 679.1 338.8 678.7 345.0 C678.2 351.2 677.0 355.3 676.4 362.0 C675.8 368.7 675.9 376.2 675.0 385.0 C674.1 393.8 672.3 405.0 671.0 415.0 C669.7 425.0 667.7 435.0 667.0 445.0 C666.3 455.0 666.5 465.0 667.0 475.0 C667.5 485.0 667.5 492.5 670.0 505.0 C672.5 517.5 677.3 533.9 682.2 549.7 C687.0 565.6 694.2 585.8 699.3 600.0 C704.4 614.2 704.8 623.4 712.7 634.8 C720.6 646.2 734.6 659.7 746.7 668.4 C758.8 677.1 773.9 682.9 785.3 687.1 C796.8 691.3 806.9 692.8 815.3 693.6 C823.8 694.3 830.2 692.6 836.0 691.5 C841.8 690.4 846.5 690.4 850.3 687.0 C854.1 683.6 857.3 680.7 858.6 671.2 C859.9 661.8 858.8 642.3 858.1 630.4 C857.4 618.6 855.8 611.3 854.4 600.0 C853.1 588.7 851.2 576.1 849.9 562.8 C848.6 549.5 848.0 533.8 846.5 520.0 C845.0 506.2 843.1 492.5 841.0 480.0 C838.9 467.5 836.8 455.3 834.0 445.0 C831.2 434.7 827.7 425.5 824.0 418.0 C820.3 410.5 818.0 404.8 812.0 400.0 C806.0 395.2 792.0 390.8 788.0 389.0"/>
<path d="M682.0 319.0 C681.7 322.5 680.8 333.2 680.0 340.0 C679.2 346.8 677.7 352.5 677.0 360.0 C676.3 367.5 676.8 375.8 676.0 385.0 C675.2 394.2 673.2 405.0 672.0 415.0 C670.8 425.0 669.5 435.0 669.0 445.0 C668.5 455.0 668.5 465.0 669.0 475.0 C669.5 485.0 669.9 492.6 672.0 505.0 C674.1 517.4 677.1 533.9 681.5 549.7 C685.9 565.5 692.8 585.9 698.6 600.0 C704.3 614.1 707.4 623.4 715.9 634.6 C724.4 645.8 737.9 658.5 749.5 667.3 C761.1 676.0 774.7 682.3 785.6 686.9 C796.4 691.6 806.3 694.3 814.7 695.1 C823.1 695.9 830.2 693.8 836.0 691.8 C841.8 689.9 846.1 688.0 849.2 683.3 C852.3 678.7 853.6 673.2 854.4 664.0 C855.2 654.9 854.0 639.1 854.0 628.5 C854.0 617.8 854.7 611.0 854.4 600.0 C854.1 589.0 853.7 575.9 852.4 562.6 C851.0 549.2 848.4 533.8 846.0 520.0 C843.7 506.2 840.7 489.7 838.0 480.0 C835.3 470.3 833.5 467.8 830.0 462.0 C826.5 456.2 821.5 449.2 817.0 445.0 C812.5 440.8 807.8 439.5 803.0 437.0 C798.2 434.5 790.5 431.2 788.0 430.0"/>
<path d="M682.0 319.0 C681.7 322.5 680.8 333.2 680.0 340.0 C679.2 346.8 677.7 352.5 677.0 360.0 C676.3 367.5 676.8 375.8 676.0 385.0 C675.2 394.2 673.2 405.0 672.0 415.0 C670.8 425.0 669.5 435.0 669.0 445.0 C668.5 455.0 668.5 465.0 669.0 475.0 C669.5 485.0 669.5 492.5 672.0 505.0 C674.5 517.5 678.1 534.0 683.9 549.8 C689.7 565.6 700.2 586.0 706.8 600.0 C713.4 614.0 715.8 623.1 723.5 634.0 C731.2 645.0 742.6 657.0 752.9 665.9 C763.2 674.7 775.4 681.6 785.5 687.0 C795.5 692.4 804.9 696.6 813.3 698.4 C821.7 700.2 829.7 699.5 836.0 697.9 C842.3 696.3 847.4 693.7 850.8 688.7 C854.3 683.7 856.1 677.9 856.6 667.8 C857.2 657.8 854.9 639.8 854.1 628.5 C853.3 617.2 852.7 610.9 851.7 600.0 C850.8 589.1 849.6 576.3 848.3 563.0 C847.1 549.6 845.9 533.8 844.2 520.0 C842.5 506.2 840.4 489.7 838.0 480.0 C835.6 470.3 833.5 467.8 830.0 462.0 C826.5 456.2 821.5 449.2 817.0 445.0 C812.5 440.8 807.8 439.5 803.0 437.0 C798.2 434.5 790.5 431.2 788.0 430.0"/>
<path d="M747.0 119.0 C747.8 122.5 750.3 132.7 752.0 140.0 C753.7 147.3 756.2 156.7 757.0 163.0 C757.8 169.3 758.2 170.7 757.0 178.0 C755.8 185.3 753.2 197.7 750.0 207.0 C746.8 216.3 742.0 225.2 738.0 234.0 C734.0 242.8 730.0 250.7 726.0 260.0 C722.0 269.3 718.0 276.7 714.0 290.0 C710.0 303.3 705.5 326.2 702.0 340.0 C698.5 353.8 695.8 360.5 693.0 373.0 C690.2 385.5 687.2 403.0 685.0 415.0 C682.8 427.0 681.2 435.0 680.0 445.0 C678.8 455.0 678.0 465.0 678.0 475.0 C678.0 485.0 678.5 492.5 680.0 505.0 C681.5 517.5 683.0 534.1 687.1 549.9 C691.2 565.8 698.8 586.0 704.6 600.0 C710.4 614.0 714.0 623.2 722.1 634.1 C730.2 645.1 742.6 657.0 753.4 665.7 C764.1 674.3 776.4 681.0 786.5 686.1 C796.6 691.3 805.8 695.1 814.1 696.5 C822.3 697.9 830.1 696.5 836.0 694.5 C841.9 692.5 846.6 689.7 849.5 684.5 C852.5 679.2 853.3 672.5 853.8 663.0 C854.2 653.5 852.4 638.1 852.2 627.6 C852.0 617.1 852.9 610.8 852.8 600.0 C852.6 589.2 852.5 576.0 851.2 562.7 C849.9 549.3 847.3 533.8 845.0 520.0 C842.6 506.2 839.2 489.2 837.0 480.0 C834.8 470.8 835.3 470.8 832.0 465.0 C828.7 459.2 820.7 450.8 817.0 445.0 C813.3 439.2 811.2 432.5 810.0 430.0"/>
<path d="M747.0 119.0 C747.8 122.5 750.3 132.7 752.0 140.0 C753.7 147.3 756.2 156.7 757.0 163.0 C757.8 169.3 758.2 170.7 757.0 178.0 C755.8 185.3 753.2 197.7 750.0 207.0 C746.8 216.3 742.0 225.2 738.0 234.0 C734.0 242.8 730.0 250.7 726.0 260.0 C722.0 269.3 718.0 276.7 714.0 290.0 C710.0 303.3 705.5 326.2 702.0 340.0 C698.5 353.8 695.8 360.5 693.0 373.0 C690.2 385.5 687.2 403.0 685.0 415.0 C682.8 427.0 681.2 435.0 680.0 445.0 C678.8 455.0 678.0 465.0 678.0 475.0 C678.0 485.0 678.5 492.5 680.0 505.0 C681.5 517.5 683.4 534.1 687.2 549.9 C691.1 565.8 697.6 585.9 702.9 600.0 C708.2 614.1 710.9 623.3 719.1 634.3 C727.3 645.4 740.7 657.7 752.1 666.2 C763.5 674.7 776.9 680.8 787.5 685.3 C798.1 689.7 807.5 692.2 815.6 692.9 C823.7 693.7 830.5 691.5 836.0 689.6 C841.5 687.7 845.8 686.2 848.7 681.7 C851.6 677.2 852.8 671.5 853.5 662.6 C854.3 653.6 853.1 638.4 853.0 628.0 C853.0 617.6 853.7 610.9 853.4 600.0 C853.0 589.1 852.5 576.0 851.0 562.7 C849.6 549.4 847.1 533.8 844.8 520.0 C842.5 506.2 839.1 489.2 837.0 480.0 C834.9 470.8 835.3 470.8 832.0 465.0 C828.7 459.2 820.7 450.8 817.0 445.0 C813.3 439.2 811.2 432.5 810.0 430.0"/>
<path d="M750.0 134.0 C750.3 137.0 751.8 145.5 752.0 152.0 C752.2 158.5 751.8 165.5 751.0 173.0 C750.2 180.5 749.7 187.5 747.0 197.0 C744.3 206.5 738.5 219.5 735.0 230.0 C731.5 240.5 729.5 249.8 726.0 260.0 C722.5 270.2 718.0 277.5 714.0 291.0 C710.0 304.5 705.5 327.2 702.0 341.0 C698.5 354.8 695.7 361.7 693.0 374.0 C690.3 386.3 688.0 403.2 686.0 415.0 C684.0 426.8 682.2 435.0 681.0 445.0 C679.8 455.0 679.2 465.0 679.0 475.0 C678.8 485.0 678.5 492.5 680.0 505.0 C681.5 517.5 683.6 534.1 687.8 550.0 C692.0 565.8 699.5 586.0 705.2 600.0 C710.9 614.0 713.8 623.2 721.9 634.1 C730.0 645.0 742.9 657.0 754.0 665.4 C765.1 673.8 778.3 679.9 788.6 684.4 C798.9 688.9 807.9 691.6 815.8 692.5 C823.7 693.5 830.5 691.7 836.0 690.1 C841.5 688.4 846.0 687.1 849.0 682.7 C852.0 678.3 853.4 672.8 854.2 663.7 C854.9 654.6 853.6 638.8 853.4 628.2 C853.2 617.6 853.6 610.9 853.0 600.0 C852.4 589.1 851.4 576.1 849.8 562.8 C848.2 549.5 845.9 533.8 843.6 520.0 C841.3 506.2 840.8 488.3 836.0 480.0 C831.2 471.7 820.8 473.3 815.0 470.0 C809.2 466.7 803.3 461.7 801.0 460.0"/>
<path d="M657.4 143.0 C658.9 147.5 663.7 160.5 666.4 170.0 C669.1 179.5 671.9 192.0 673.4 200.0 C674.9 208.0 675.6 210.5 675.4 218.0 C675.2 225.5 673.9 235.5 672.4 245.0 C670.9 254.5 668.8 265.5 666.4 275.0 C664.0 284.5 659.5 293.7 658.0 302.0 C656.5 310.3 656.6 317.5 657.4 325.0 C658.1 332.5 660.8 340.8 662.5 347.0 C664.2 353.2 666.4 355.7 667.5 362.0 C668.7 368.3 669.6 376.2 669.4 385.0 C669.2 393.8 667.7 405.0 666.4 415.0 C665.1 425.0 662.2 435.0 661.4 445.0 C660.6 455.0 660.9 465.0 661.4 475.0 C661.9 485.0 662.0 492.6 664.4 505.0 C666.8 517.4 671.0 533.6 676.0 549.5 C681.1 565.3 688.7 585.8 694.8 600.0 C700.9 614.2 704.1 623.3 712.6 634.8 C721.2 646.2 734.5 659.5 746.0 668.7 C757.5 677.9 775.9 686.5 781.9 690.1"/>
<path d="M654.4 153.0 C656.1 157.5 661.6 171.3 664.4 180.0 C667.2 188.7 669.9 197.5 671.4 205.0 C672.9 212.5 673.6 217.5 673.4 225.0 C673.2 232.5 671.9 241.2 670.4 250.0 C668.9 258.8 666.5 269.0 664.4 278.0 C662.3 287.0 658.3 295.8 657.5 304.0 C656.7 312.2 658.6 319.5 659.4 327.0 C660.2 334.5 661.1 342.8 662.2 349.0 C663.2 355.2 664.7 357.8 665.6 364.0 C666.4 370.2 667.6 377.3 667.4 386.0 C667.2 394.7 665.7 406.0 664.4 416.0 C663.1 426.0 660.2 436.0 659.4 446.0 C658.6 456.0 658.9 466.2 659.4 476.0 C659.9 485.8 659.9 492.8 662.4 505.0 C664.9 517.2 669.3 533.6 674.4 549.4 C679.5 565.2 687.0 585.8 693.1 600.0 C699.2 614.2 702.5 623.4 711.2 634.9 C719.8 646.4 733.2 659.8 744.9 669.2 C756.5 678.5 774.9 687.2 780.9 690.9"/>
<path d="M665.6 154.0 C666.9 158.3 671.3 171.5 673.6 180.0 C675.9 188.5 678.3 197.7 679.6 205.0 C680.9 212.3 681.8 216.5 681.6 224.0 C681.4 231.5 680.1 240.7 678.6 250.0 C677.1 259.3 674.3 271.0 672.6 280.0 C670.9 289.0 668.3 296.0 668.5 304.0 C668.6 312.0 672.8 320.3 673.6 328.0 C674.4 335.7 673.3 343.7 673.3 350.0 C673.3 356.3 673.1 359.7 673.7 366.0 C674.2 372.3 676.6 379.5 676.6 388.0 C676.6 396.5 674.9 407.3 673.6 417.0 C672.3 426.7 669.4 436.2 668.6 446.0 C667.8 455.8 668.1 466.2 668.6 476.0 C669.1 485.8 669.4 492.7 671.6 505.0 C673.8 517.3 677.1 533.9 682.0 549.7 C686.9 565.5 694.9 585.9 700.9 600.0 C706.9 614.1 709.7 623.3 717.9 634.4 C726.1 645.6 738.9 658.2 750.2 667.0 C761.4 675.8 779.3 683.9 785.2 687.3"/>
<path d="M646.4 188.0 C648.7 192.0 656.9 205.0 660.4 212.0 C663.9 219.0 665.9 224.5 667.4 230.0 C668.9 235.5 669.6 237.5 669.4 245.0 C669.2 252.5 667.5 265.8 666.4 275.0 C665.3 284.2 661.6 291.3 662.6 300.0 C663.6 308.7 671.3 318.7 672.4 327.0 C673.4 335.3 669.6 343.7 668.8 350.0 C668.0 356.3 667.4 358.8 667.6 365.0 C667.9 371.2 670.4 378.3 670.4 387.0 C670.4 395.7 668.7 407.2 667.4 417.0 C666.1 426.8 663.2 436.2 662.4 446.0 C661.6 455.8 661.9 466.2 662.4 476.0 C662.9 485.8 663.0 492.7 665.4 505.0 C667.8 517.3 671.8 533.7 676.9 549.5 C681.9 565.3 689.5 585.8 695.6 600.0 C701.7 614.2 704.9 623.3 713.4 634.7 C721.9 646.2 735.1 659.3 746.6 668.5 C758.1 677.6 776.4 686.2 782.3 689.7"/>
<path d="M604.4 346.5 C604.1 348.8 602.4 356.5 602.4 360.0 C602.4 363.5 602.6 364.4 604.4 367.5 C606.2 370.6 610.5 375.0 613.4 378.8 C616.3 382.5 618.7 384.8 621.9 390.0 C625.1 395.2 629.6 404.2 632.4 410.0 C635.1 415.8 636.9 419.2 638.4 425.0 C639.9 430.8 640.7 436.7 641.4 445.0 C642.1 453.3 642.1 465.0 642.4 475.0 C642.7 485.0 640.7 492.7 643.4 505.0 C646.1 517.3 653.0 532.9 658.6 548.8 C664.2 564.6 670.5 585.5 677.0 600.0 C683.4 614.5 687.8 623.6 697.3 635.9 C706.8 648.1 721.4 663.3 733.9 673.7 C746.4 684.1 765.9 694.2 772.3 698.3"/>
<path d="M613.6 352.5 C613.4 354.1 612.3 358.8 612.6 362.0 C612.9 365.2 613.8 368.3 615.6 372.0 C617.4 375.7 620.9 380.0 623.6 384.0 C626.3 388.0 628.9 391.3 631.6 396.0 C634.3 400.7 637.4 406.3 639.6 412.0 C641.8 417.7 643.3 423.7 644.6 430.0 C645.9 436.3 646.8 441.7 647.6 450.0 C648.4 458.3 649.1 470.8 649.6 480.0 C650.1 489.2 648.1 493.5 650.6 505.0 C653.1 516.5 659.2 533.2 664.6 549.0 C670.0 564.8 676.8 585.6 683.1 600.0 C689.4 614.4 693.4 623.5 702.6 635.5 C711.7 647.5 725.9 662.0 738.1 672.0 C750.2 682.0 769.3 691.5 775.5 695.5"/>
<path d="M614.4 345.0 C614.9 346.2 615.6 349.4 617.4 352.5 C619.1 355.6 621.8 360.0 624.9 363.8 C628.0 367.5 633.3 371.5 636.2 375.0 C639.1 378.5 640.5 380.8 642.4 385.0 C644.3 389.2 646.1 394.2 647.4 400.0 C648.7 405.8 649.7 412.5 650.4 420.0 C651.1 427.5 651.1 435.8 651.4 445.0 C651.7 454.2 652.4 465.0 652.4 475.0 C652.4 485.0 649.3 492.7 651.4 505.0 C653.5 517.3 659.9 533.2 665.2 549.0 C670.6 564.9 677.4 585.6 683.8 600.0 C690.1 614.4 694.0 623.5 703.2 635.5 C712.3 647.4 726.4 661.8 738.5 671.8 C750.6 681.7 769.7 691.3 775.9 695.1"/>
<path d="M621.9 346.5 C622.4 347.8 622.8 350.9 624.6 354.0 C626.4 357.1 629.4 361.3 632.6 365.0 C635.8 368.7 640.8 372.3 643.6 376.0 C646.4 379.7 647.8 382.7 649.6 387.0 C651.4 391.3 653.3 396.2 654.6 402.0 C655.9 407.8 656.9 414.5 657.6 422.0 C658.3 429.5 658.3 437.8 658.6 447.0 C658.9 456.2 659.6 467.3 659.6 477.0 C659.6 486.7 656.7 493.0 658.6 505.0 C660.5 517.0 666.0 533.4 671.2 549.3 C676.4 565.1 683.7 585.7 689.9 600.0 C696.1 614.3 699.6 623.4 708.4 635.1 C717.2 646.8 730.9 660.5 742.7 670.1 C754.5 679.6 773.1 688.6 779.2 692.3"/>
<path d="M621.9 352.5 C623.3 353.8 627.5 357.1 630.4 360.0 C633.3 362.9 636.6 365.7 639.4 370.0 C642.2 374.3 645.2 380.2 647.4 386.0 C649.6 391.8 651.2 398.5 652.4 405.0 C653.6 411.5 653.9 417.5 654.4 425.0 C654.9 432.5 655.2 440.8 655.4 450.0 C655.6 459.2 655.4 470.8 655.4 480.0 C655.4 489.2 653.2 493.5 655.4 505.0 C657.6 516.5 663.3 533.3 668.6 549.2 C673.9 565.0 680.9 585.7 687.2 600.0 C693.4 614.3 697.1 623.4 706.1 635.3 C715.0 647.1 728.9 661.1 740.8 670.8 C752.8 680.6 771.6 689.8 777.7 693.6"/>
<path d="M588.6 262.0 C590.6 264.3 597.0 271.3 600.6 276.0 C604.2 280.7 607.4 286.0 610.1 290.0 C612.8 294.0 615.9 296.3 616.6 300.0 C617.4 303.7 615.4 308.3 614.6 312.0 C613.8 315.7 614.0 318.3 611.6 322.0 C609.2 325.7 603.3 330.8 600.1 334.0 C596.9 337.2 595.4 338.4 592.6 341.0 C589.9 343.6 586.9 346.0 583.6 349.5 C580.3 353.0 575.8 357.8 572.6 362.0 C569.4 366.2 566.9 370.3 564.6 375.0 C562.3 379.7 560.1 385.0 558.6 390.0 C557.1 395.0 555.4 399.5 555.6 405.0 C555.8 410.5 556.8 418.0 559.6 423.0 C562.4 428.0 567.9 431.0 572.6 435.0 C577.3 439.0 582.6 442.3 587.6 447.0 C592.6 451.7 597.9 457.5 602.6 463.0 C607.3 468.5 612.1 473.0 615.6 480.0 C619.1 487.0 619.2 493.7 623.6 505.0 C628.0 516.3 636.1 532.3 642.2 548.1 C648.3 563.9 653.4 585.2 660.2 600.0 C667.0 614.8 672.5 623.8 682.9 636.9 C693.3 649.9 709.1 666.9 722.5 678.4 C735.9 689.9 756.4 701.4 763.2 706.0"/>
<path d="M621.9 309.8 C620.6 311.0 616.8 314.6 614.4 317.0 C612.0 319.4 610.6 320.8 607.4 324.0 C604.2 327.2 599.4 332.2 595.4 336.0 C591.4 339.8 587.1 343.2 583.4 347.0 C579.7 350.8 576.2 354.8 573.4 359.0 C570.6 363.2 568.1 367.3 566.4 372.0 C564.7 376.7 563.9 382.3 563.4 387.0 C562.9 391.7 562.7 395.3 563.4 400.0 C564.1 404.7 564.9 410.5 567.4 415.0 C569.9 419.5 574.1 422.7 578.4 427.0 C582.7 431.3 588.6 436.0 593.4 441.0 C598.2 446.0 603.2 451.7 607.4 457.0 C611.6 462.3 615.2 466.7 618.4 473.0 C621.6 479.3 624.6 489.7 626.4 495.0 C628.2 500.3 626.0 496.1 629.4 505.0 C632.8 513.9 641.0 532.5 647.0 548.3 C652.9 564.1 658.4 585.3 665.1 600.0 C671.8 614.7 677.0 623.7 687.1 636.6 C697.2 649.4 712.7 665.8 725.8 677.0 C739.0 688.2 759.2 699.3 765.8 703.7"/>
<path d="M631.6 207.0 C632.6 210.8 635.9 222.5 637.6 230.0 C639.3 237.5 640.4 245.0 641.6 252.0 C642.8 259.0 644.4 265.7 644.6 272.0 C644.8 278.3 644.0 285.3 642.6 290.0 C641.2 294.7 638.4 295.8 636.1 300.0 C633.8 304.2 632.1 310.2 628.6 315.0 C625.1 319.8 619.6 324.0 615.1 328.5 C610.6 333.0 605.9 336.8 601.6 342.0 C597.4 347.2 592.6 355.2 589.6 360.0 C586.6 364.8 584.9 366.8 583.6 371.0 C582.3 375.2 581.3 380.2 581.6 385.0 C581.9 389.8 583.3 395.0 585.6 400.0 C587.9 405.0 591.9 410.0 595.6 415.0 C599.3 420.0 603.1 424.2 607.6 430.0 C612.1 435.8 618.1 442.5 622.6 450.0 C627.1 457.5 631.3 465.8 634.6 475.0 C637.9 484.2 638.7 492.7 642.6 505.0 C646.5 517.3 652.3 532.9 657.9 548.7 C663.6 564.6 669.8 585.5 676.3 600.0 C682.8 614.5 687.2 623.6 696.7 635.9 C706.3 648.2 720.9 663.4 733.4 673.9 C746.0 684.3 765.5 694.5 771.9 698.6"/>
<path d="M624.4 212.0 C625.4 215.8 628.7 227.8 630.4 235.0 C632.1 242.2 633.2 248.5 634.4 255.0 C635.6 261.5 637.1 267.8 637.4 274.0 C637.7 280.2 637.1 287.0 636.4 292.0 C635.7 297.0 635.1 300.3 633.4 304.0 C631.7 307.7 629.9 310.2 626.4 314.0 C622.9 317.8 616.7 322.7 612.4 327.0 C608.1 331.3 603.9 335.8 600.4 340.0 C596.9 344.2 593.9 347.8 591.4 352.0 C588.9 356.2 586.7 359.5 585.4 365.0 C584.1 370.5 582.2 379.2 583.4 385.0 C584.6 390.8 588.6 395.0 592.4 400.0 C596.2 405.0 602.2 410.0 606.4 415.0 C610.6 420.0 613.9 425.0 617.4 430.0 C620.9 435.0 624.6 439.2 627.4 445.0 C630.2 450.8 631.9 455.0 634.4 465.0 C636.9 475.0 638.5 491.0 642.4 505.0 C646.3 519.0 652.2 532.9 657.8 548.7 C663.4 564.6 669.7 585.5 676.1 600.0 C682.6 614.5 687.1 623.6 696.6 635.9 C706.1 648.2 720.8 663.5 733.3 673.9 C745.9 684.4 765.4 694.5 771.8 698.7"/>
<path d="M876.0 480.0 C876.0 486.7 875.8 506.7 876.0 520.0 C876.2 533.3 877.2 546.7 877.5 560.0 C877.8 573.3 877.6 586.5 878.0 600.0 C878.4 613.5 880.2 666.0 880.0 641.0 C879.8 616.0 877.5 488.5 876.6 450.0 C875.7 411.5 875.4 423.3 874.6 410.0 C873.8 396.7 872.8 382.5 871.6 370.0 C870.4 357.5 868.6 343.9 867.6 335.0 C866.6 326.1 866.7 322.8 865.9 316.3 C865.1 309.8 864.0 302.1 862.9 296.0 C861.8 289.9 861.2 284.9 859.1 279.5 C857.0 274.1 853.4 268.3 850.1 263.8 C846.8 259.2 841.0 254.0 839.2 252.0"/>
<path d="M873.4 480.0 C873.5 486.7 873.5 506.6 873.9 520.0 C874.2 533.4 875.2 546.9 875.6 560.2 C876.0 573.5 875.8 586.7 876.2 600.0 C876.6 613.3 878.8 665.1 878.1 640.1 C877.5 615.1 874.0 488.3 872.4 450.0 C870.8 411.7 869.7 423.3 868.4 410.0 C867.1 396.7 865.7 382.5 864.4 370.0 C863.1 357.5 861.4 343.3 860.4 335.0 C859.4 326.7 859.2 326.2 858.2 320.0 C857.2 313.8 855.8 304.0 854.4 297.5 C853.0 291.0 852.4 286.0 849.9 281.0 C847.4 276.0 844.6 272.3 839.4 267.5 C834.1 262.7 821.9 254.6 818.4 252.0"/>
<path d="M869.4 480.0 C869.6 486.7 870.0 506.6 870.6 520.0 C871.1 533.4 872.1 547.2 872.6 560.5 C873.1 573.8 873.0 587.0 873.5 600.0 C873.9 613.0 876.1 663.7 875.2 638.7 C874.4 613.7 870.4 488.1 868.4 450.0 C866.4 411.9 865.1 423.3 863.4 410.0 C861.7 396.7 859.8 382.5 858.4 370.0 C857.0 357.5 856.1 343.3 855.2 335.0 C854.3 326.7 853.9 325.0 852.9 320.0 C851.9 315.0 850.6 309.8 849.2 305.0 C847.8 300.2 847.2 296.1 844.7 291.5 C842.2 286.9 838.1 281.6 834.2 277.3 C830.3 273.1 823.5 267.9 821.4 266.0"/>
<path d="M869.6 480.0 C869.8 486.7 870.2 506.6 870.7 520.0 C871.2 533.4 872.3 547.1 872.8 560.5 C873.3 573.8 873.2 587.0 873.6 600.0 C874.0 613.0 876.4 663.8 875.4 638.8 C874.4 613.8 869.6 486.5 867.6 450.0 C865.6 413.5 865.4 431.7 863.6 420.0 C861.8 408.3 858.6 391.7 856.6 380.0 C854.6 368.3 853.2 357.5 851.6 350.0 C850.0 342.5 848.6 339.4 847.1 335.0 C845.6 330.6 845.2 328.5 842.6 323.8 C840.0 319.0 835.4 310.9 831.4 306.5 C827.4 302.1 821.6 299.9 818.6 297.5 C815.6 295.1 815.8 294.2 813.4 292.0 C811.0 289.8 811.6 289.5 804.4 284.0 C797.2 278.5 775.9 263.1 770.2 258.9"/>
<path d="M863.4 480.0 C863.8 486.7 864.8 506.5 865.6 520.0 C866.4 533.5 867.6 547.6 868.2 560.9 C868.8 574.3 868.9 587.4 869.4 600.0 C869.8 612.6 872.2 661.6 870.9 636.6 C869.5 611.6 863.5 484.4 861.4 450.0 C859.3 415.6 860.6 439.2 858.4 430.0 C856.2 420.8 851.4 406.7 848.4 395.0 C845.4 383.3 842.3 370.0 840.4 360.0 C838.5 350.0 838.4 340.7 837.2 335.0 C836.0 329.3 835.3 329.5 833.4 326.0 C831.5 322.5 828.4 317.7 825.9 314.0 C823.4 310.3 821.0 307.0 818.4 304.0 C815.8 301.0 813.1 298.4 810.4 296.0 C807.6 293.6 808.1 294.6 801.9 289.3 C795.7 284.0 778.1 268.2 773.4 264.0"/>
<path d="M863.6 480.0 C864.0 486.7 865.0 506.5 865.8 520.0 C866.6 533.5 867.7 547.6 868.4 560.9 C869.0 574.3 869.1 587.4 869.5 600.0 C869.9 612.6 872.7 661.7 871.0 636.7 C869.4 611.7 862.8 487.8 859.6 450.0 C856.4 412.2 854.6 421.7 851.6 410.0 C848.6 398.3 844.9 390.0 841.6 380.0 C838.3 370.0 834.3 357.5 831.6 350.0 C828.9 342.5 827.1 338.5 825.4 335.0 C823.7 331.5 823.5 331.2 821.6 329.0 C819.7 326.8 817.9 324.5 814.1 321.5 C810.4 318.5 804.7 315.1 799.1 311.0 C793.5 306.9 783.7 299.3 780.6 297.0"/>
<path d="M859.6 480.0 C860.1 486.7 861.5 506.5 862.5 520.0 C863.4 533.5 864.7 547.9 865.4 561.2 C866.1 574.6 866.3 587.7 866.8 600.0 C867.2 612.3 869.6 660.3 868.1 635.3 C866.6 610.3 860.7 487.9 857.6 450.0 C854.5 412.1 852.6 420.3 849.6 408.0 C846.6 395.7 842.9 386.5 839.6 376.0 C836.3 365.5 832.4 352.5 829.6 345.0 C826.8 337.5 824.9 334.5 822.6 331.0 C820.3 327.5 819.3 327.0 815.6 324.0 C811.9 321.0 805.9 316.9 800.6 313.0 C795.4 309.1 786.9 302.6 784.1 300.5"/>
<path d="M849.6 480.0 C850.4 486.7 852.8 506.3 854.2 520.0 C855.6 533.7 857.1 548.6 858.0 562.0 C859.0 575.3 859.4 588.4 859.9 600.0 C860.4 611.6 863.4 656.8 860.9 631.8 C858.3 606.8 848.1 483.6 844.6 450.0 C841.1 416.4 841.8 437.5 839.6 430.0 C837.4 422.5 834.6 412.8 831.6 405.0 C828.6 397.2 824.9 388.8 821.6 383.0 C818.3 377.2 816.6 375.2 811.6 370.0 C806.6 364.8 799.6 358.7 791.6 352.0 C783.6 345.3 772.8 337.7 763.6 330.0 C754.4 322.3 741.1 310.0 736.6 306.0"/>
<path d="M844.4 480.0 C845.3 486.7 848.3 506.3 849.9 520.0 C851.6 533.7 853.1 549.0 854.2 562.4 C855.3 575.7 855.9 588.7 856.4 600.0 C856.8 611.3 859.9 654.9 857.1 629.9 C854.3 604.9 843.3 484.2 839.4 450.0 C835.5 415.8 836.1 433.3 833.4 425.0 C830.7 416.7 826.7 407.5 823.4 400.0 C820.1 392.5 817.1 386.0 813.4 380.0 C809.7 374.0 807.2 369.0 801.4 364.0 C795.6 359.0 787.1 355.7 778.4 350.0 C769.7 344.3 756.4 335.0 749.4 330.0 C742.4 325.0 738.6 321.7 736.4 320.0"/>
<path d="M858.6 480.0 C859.1 486.7 860.6 506.4 861.6 520.0 C862.7 533.6 863.9 548.0 864.7 561.3 C865.4 574.6 865.6 587.7 866.1 600.0 C866.5 612.3 869.1 659.9 867.4 634.9 C865.6 609.9 858.2 484.2 855.6 450.0 C853.0 415.8 853.9 438.3 851.6 430.0 C849.3 421.7 844.9 408.7 841.6 400.0 C838.3 391.3 834.9 384.7 831.6 378.0 C828.3 371.3 825.3 365.5 821.6 360.0 C817.9 354.5 814.4 348.9 809.6 345.0 C804.9 341.1 795.9 337.9 793.1 336.5"/>
<path d="M852.4 480.0 C853.1 486.7 855.2 506.4 856.5 520.0 C857.8 533.6 859.2 548.4 860.1 561.8 C861.0 575.1 861.4 588.2 861.8 600.0 C862.3 611.8 864.8 656.1 862.9 632.7 C861.0 609.4 853.0 492.1 850.4 460.0 C847.8 427.9 849.2 448.3 847.4 440.0 C845.6 431.7 842.4 419.2 839.4 410.0 C836.4 400.8 832.9 392.3 829.4 385.0 C825.9 377.7 822.7 371.2 818.4 366.0 C814.1 360.8 808.3 357.0 803.4 354.0 C798.5 351.0 791.3 349.0 788.9 348.0"/>
<path d="M674.0 305.0 C674.5 308.8 676.3 320.8 677.0 328.0 C677.7 335.2 678.2 341.8 678.0 348.0 C677.8 354.2 676.3 362.2 676.0 365.0"/>
<path d="M686.0 318.0 C685.5 321.3 684.2 331.3 683.0 338.0 C681.8 344.7 679.7 354.7 679.0 358.0"/>
<path d="M829.0 544.0 C830.8 546.7 836.5 554.5 840.0 560.0 C843.5 565.5 847.8 568.7 850.0 577.0 C852.2 585.3 852.5 604.5 853.0 610.0"/>
<path d="M832.0 544.0 C833.7 546.7 838.7 554.5 842.0 560.0 C845.3 565.5 849.7 568.7 852.0 577.0 C854.3 585.3 855.3 604.5 856.0 610.0"/>
</g>
<rect x="347.5" y="830.5" width="95" height="24" rx="3" fill="url(#btn)" stroke="#8a7f72"/>
<text x="355" y="847" font-size="12.7" fill="#000" textLength="80" lengthAdjust="spacingAndGlyphs">Plane Option</text>
<path d="M1526.5 26.5 L1798.5 26.5 L1812.5 13 L1826.5 26.5 L1856.5 26.5 L1856.5 122.5 L1526.5 122.5 Z" fill="#fff" stroke="#000"/>
<rect x="1528" y="28" width="30" height="93" fill="#5394d6"/>
<text x="1573" y="52" font-size="16" fill="#000" font-weight="bold" textLength="158" lengthAdjust="spacingAndGlyphs">Updates Available</text>
<path d="M1834 43 L1840 49 M1840 43 L1834 49" stroke="#000" stroke-width="2"/>
<text x="1584" y="76" font-size="12.7" textLength="253" lengthAdjust="spacingAndGlyphs">There are <tspan font-weight="bold">3</tspan> package updates available.</text>
<rect x="1720.5" y="87.5" width="95" height="23" rx="3" fill="url(#btn)" stroke="#8a7f72"/>
<text x="1725" y="103" font-size="11.5" fill="#000" textLength="86" lengthAdjust="spacingAndGlyphs">View Updates...</text>
</svg></body></html>
